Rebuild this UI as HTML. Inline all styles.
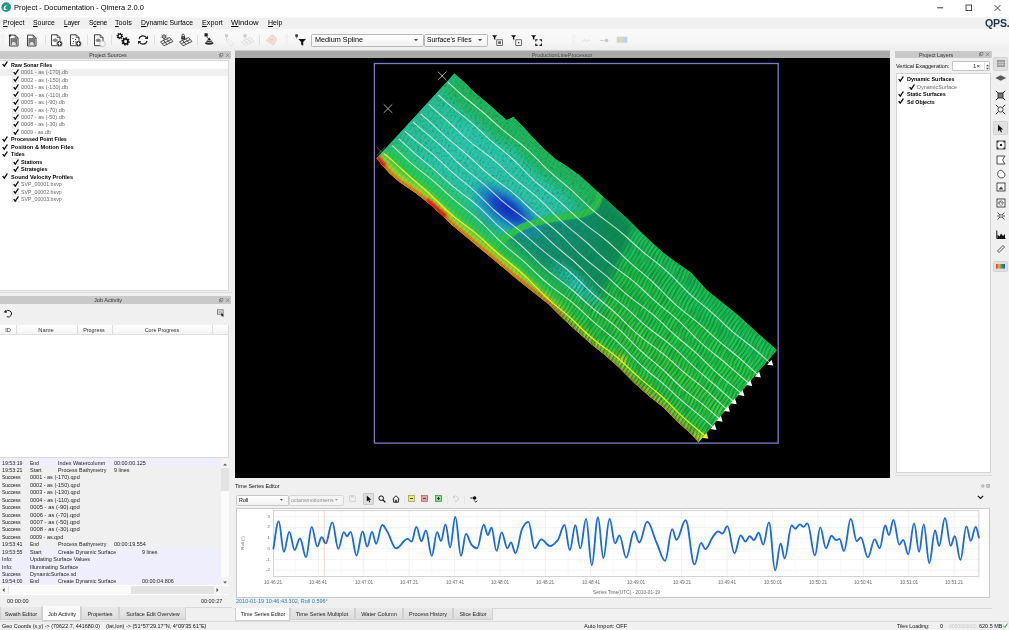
<!DOCTYPE html>
<html><head><meta charset="utf-8"><title>Project - Documentation - Qimera 2.0.0</title>
<style>
html,body{margin:0;padding:0;background:#f0f0f0;}
body{width:1009px;height:630px;position:relative;overflow:hidden;font-family:"Liberation Sans",sans-serif;}
.t{position:absolute;white-space:nowrap;will-change:transform;}
.r{position:absolute;}
svg{position:absolute;overflow:visible;}
</style></head><body>
<div class="r" style="left:0.00px;top:0.00px;width:1009.00px;height:17.30px;background:#fff;"></div>
<div class="r" style="left:0.00px;top:17.30px;width:1009.00px;height:11.50px;background:#f0f0f0;border-top:.5px solid #f7f7f7;"></div>
<div class="r" style="left:0.00px;top:28.80px;width:1009.00px;height:21.70px;background:linear-gradient(#fafafa,#f6f6f6 60%,#eeeeee);"></div>
<div class="r" style="left:0.00px;top:50.50px;width:1009.00px;height:580.00px;background:#f0f0f0;"></div>
<svg style="left:1.2px;top:2.2px" width="10.4" height="10.4" viewBox="0 0 12 12"><circle cx="6" cy="6" r="5.6" fill="#1f9a8a"/><path d="M3 7.5c0-3 3-4.5 5-3-1.500-.3-3 .6-3 2.200 0 1.500 1.500 2 2.600 1.300C6.500 9.800 3 9.800 3 7.500z" fill="#fff"/></svg>
<div class="t" style="top:3.00px;font-size:7.478px;line-height:10px;color:#000;left:14.20px;"><span>Project - Documentation - Qimera 2.0.0</span></div>
<svg style="left:930px;top:0" width="79" height="16" viewBox="0 0 79 16"><path d="M7.200 7.800h6" stroke="#222" stroke-width=".9" fill="none"/><rect x="36" y="5" width="5.600" height="5.600" fill="none" stroke="#222" stroke-width=".8"/><path d="M64.500 5l6 6M70.500 5l-6 6" stroke="#222" stroke-width=".8" fill="none"/></svg>
<div class="t" style="top:18.10px;font-size:6.882px;line-height:10px;color:#000;left:2.60px;"><span><u>P</u>roject</span></div>
<div class="t" style="top:18.10px;font-size:6.899px;line-height:10px;color:#000;left:33.00px;"><span><u>S</u>ource</span></div>
<div class="t" style="top:18.10px;font-size:6.789px;line-height:10px;color:#000;letter-spacing:-0.234px;left:63.50px;"><span><u>L</u>ayer</span></div>
<div class="t" style="top:18.10px;font-size:6.789px;line-height:10px;color:#000;letter-spacing:-0.252px;left:88.80px;"><span>S<u>c</u>ene</span></div>
<div class="t" style="top:18.10px;font-size:7.210px;line-height:10px;color:#000;left:115.00px;"><span><u>T</u>ools</span></div>
<div class="t" style="top:18.10px;font-size:6.854px;line-height:10px;color:#000;left:140.80px;"><span><u>D</u>ynamic Surface</span></div>
<div class="t" style="top:18.10px;font-size:7.205px;line-height:10px;color:#000;left:202.00px;"><span><u>E</u>xport</span></div>
<div class="t" style="top:18.10px;font-size:7.768px;line-height:10px;color:#000;left:231.40px;"><span><u>W</u>indow</span></div>
<div class="t" style="top:18.10px;font-size:7.002px;line-height:10px;color:#000;left:267.80px;"><span><u>H</u>elp</span></div>
<div class="t" style="top:17.50px;font-size:10.600px;line-height:10px;color:#1b3350;font-weight:700;letter-spacing:-0.200px;left:984.60px;"><span>QPS.</span></div>
<svg style="left:0.50px;top:34px" width="3" height="11.5"><path d="M.8 0V11.5M2.300 0V11.5" stroke="#cfcfcf" stroke-width=".5" stroke-dasharray=".6 1"/></svg>
<svg style="left:8.00px;top:33.50px" width="12" height="12.6" viewBox="0 0 12 12"><path d="M1.500 .8h5.800l2.700 2.700v8.200h-8.500z" fill="#fcfcfc" stroke="#2a2a2a" stroke-width=".9"/><path d="M7.200 .8v2.800h2.800" fill="none" stroke="#2a2a2a" stroke-width=".7"/><rect x="2.500" y="3.800" width="6.500" height="7" fill="#6f6f6f"/><path d="M3.800 10.800V8.600q1.950-2 3.900 0v2.200z" fill="#e4e4e4"/><path d="M3.500 5.500h4.500M3.500 6.800h4.500" stroke="#9a9a9a" stroke-width=".5"/><circle cx="1.900" cy="1.400" r="1.100" fill="#222"/></svg>
<svg style="left:26.00px;top:33.50px" width="12" height="12.6" viewBox="0 0 12 12"><path d="M1.500 .8h5.800l2.700 2.700v8.200h-8.500z" fill="#fcfcfc" stroke="#2a2a2a" stroke-width=".9"/><path d="M7.200 .8v2.800h2.800" fill="none" stroke="#2a2a2a" stroke-width=".7"/><rect x="2.500" y="3.800" width="6.500" height="7" fill="#6f6f6f"/><path d="M3.800 10.800V8.600q1.950-2 3.900 0v2.200z" fill="#e4e4e4"/><path d="M3.500 5.500h4.500M3.500 6.800h4.500" stroke="#9a9a9a" stroke-width=".5"/></svg>
<div class="r" style="left:44.50px;top:34.50px;width:0.60px;height:10.70px;background:#dddddd;"></div>
<svg style="left:50.25px;top:33.55px" width="12.5" height="12.5" viewBox="0 0 12.500 12.500"><path d="M1.500 .8h5.800l2.700 2.700v8.200h-8.500z" fill="#fcfcfc" stroke="#2a2a2a" stroke-width=".9"/><path d="M7.200 .8v2.800h2.800" fill="none" stroke="#2a2a2a" stroke-width=".7"/><ellipse cx="5.200" cy="6.300" rx="2.700" ry="1.600" fill="#888"/><ellipse cx="5.200" cy="5.600" rx="1.500" ry="1.200" fill="#888"/><circle cx="9.500" cy="9.700" r="2.900" fill="#222" stroke="#f6f6f6" stroke-width=".5"/><path d="M7.800 9.700h3.400M9.500 8v3.400" stroke="#fff" stroke-width="1"/></svg>
<svg style="left:68.75px;top:33.55px" width="12.5" height="12.5" viewBox="0 0 12.500 12.500"><path d="M1.500 .8h5.800l2.700 2.700v8.200h-8.500z" fill="#fcfcfc" stroke="#2a2a2a" stroke-width=".9"/><path d="M7.200 .8v2.800h2.800" fill="none" stroke="#2a2a2a" stroke-width=".7"/><path d="M3.500 4.500h1M6 5.500h1M4 7.500h1M6.200 8h1M3.500 9.500h1" stroke="#333" stroke-width="1"/><circle cx="9.500" cy="9.700" r="2.900" fill="#222" stroke="#f6f6f6" stroke-width=".5"/><path d="M7.800 9.700h3.400M9.500 8v3.400" stroke="#fff" stroke-width="1"/></svg>
<div class="r" style="left:86.80px;top:34.50px;width:0.60px;height:10.70px;background:#dddddd;"></div>
<svg style="left:92.75px;top:33.55px" width="12.5" height="12.5" viewBox="0 0 12.500 12.500"><path d="M1.500 .8h5.800l2.700 2.700v8.200h-8.500z" fill="#fcfcfc" stroke="#2a2a2a" stroke-width=".9"/><path d="M7.200 .8v2.800h2.800" fill="none" stroke="#2a2a2a" stroke-width=".7"/><ellipse cx="5.200" cy="6.300" rx="2.700" ry="1.600" fill="#888"/><ellipse cx="5.200" cy="5.600" rx="1.500" ry="1.200" fill="#888"/><circle cx="9.500" cy="9.700" r="2.800" fill="#f6f6f6" stroke="#b8b8b8" stroke-width=".8"/></svg>
<div class="r" style="left:110.80px;top:34.50px;width:0.60px;height:10.70px;background:#dddddd;"></div>
<svg style="left:116.30px;top:32.30px" width="14" height="14" viewBox="0 0 14 14"><path d="M5.88 4.42L7.03 4.66M4.97 5.77L5.62 6.75M3.38 6.08L3.14 7.23M2.03 5.17L1.05 5.82M1.72 3.58L0.57 3.34M2.63 2.23L1.98 1.25M4.22 1.92L4.46 0.77M5.57 2.83L6.55 2.18" stroke="#111" stroke-width="1.30" fill="none"/><circle cx="3.8" cy="4" r="1.85" fill="#f6f6f6" stroke="#111" stroke-width="1.30"/><path d="M12.27 9.94L13.74 10.24M11.10 11.67L11.93 12.92M9.06 12.07L8.76 13.54M7.33 10.90L6.08 11.73M6.93 8.86L5.46 8.56M8.10 7.13L7.27 5.88M10.14 6.73L10.44 5.26M11.87 7.90L13.12 7.07" stroke="#111" stroke-width="1.66" fill="none"/><circle cx="9.6" cy="9.4" r="2.37" fill="#f6f6f6" stroke="#111" stroke-width="1.66"/></svg>
<svg style="left:137.20px;top:33.80px" width="12" height="12" viewBox="0 0 12 12"><path d="M2 5A4.200 4.200 0 0 1 9.800 4.200M10 7A4.200 4.200 0 0 1 2.200 7.800" fill="none" stroke="#222" stroke-width="1.100"/><path d="M11 1.800v3.300H7.700zM1 10.200V6.900h3.300z" fill="#222"/></svg>
<div class="r" style="left:154.00px;top:34.50px;width:0.60px;height:10.70px;background:#dddddd;"></div>
<svg style="left:159.75px;top:33.85px" width="13.5" height="12.5" viewBox="0 0 13.500 12.500"><path d="M.5 7.800L9.500 3.500 13 7.500 4 11.800z" fill="#ececec" stroke="#222" stroke-width="0.75"/><path d="M3.500 6.400l3.500 4M6.500 4.900l3.500 4M2.250 9.800l9-4.300" stroke="#222" stroke-width="0.75" fill="none"/><circle cx="4" cy="2.600" r="1.700" fill="#fff" stroke="#222" stroke-width=".9"/><circle cx="4" cy="2.600" r=".6" fill="#222"/><path d="M1.200 .8l.8.600M6.800 .8l-.8.600M.6 3.400l1 .0M7.400 3.400l-1 0" stroke="#222" stroke-width=".5"/><path d="M4 4.300v2" stroke="#222" stroke-width=".6"/></svg>
<svg style="left:178.55px;top:33.85px" width="13.5" height="12.5" viewBox="0 0 13.500 12.500"><path d="M.5 7.800L9.500 3.500 13 7.500 4 11.800z" fill="#ececec" stroke="#222" stroke-width="0.75"/><path d="M3.500 6.400l3.500 4M6.500 4.900l3.500 4M2.250 9.800l9-4.300" stroke="#222" stroke-width="0.75" fill="none"/><rect x="2.300" y="2.200" width="3.800" height="3.200" rx=".4" fill="#222"/><path d="M3.100 2.200V1.300a1.100 1.100 0 0 1 2.200 0v.9" fill="none" stroke="#222" stroke-width=".8"/><circle cx="4.200" cy="3.700" r=".55" fill="#ddd"/></svg>
<div class="r" style="left:197.00px;top:34.50px;width:0.60px;height:10.70px;background:#dddddd;"></div>
<svg style="left:204.05px;top:33.25px" width="10.5" height="12.5" viewBox="0 0 10.500 12.500"><rect x=".5" y=".3" width="3.300" height="3.300" rx=".4" fill="#222"/><path d="M2.200 3.500L4.800 6" stroke="#222" stroke-width=".8"/><path d="M5.200 4.600L.8 10.500q4.400 2.600 8.800 0z" fill="#222"/><path d="M3.300 7.300q1.900 1 3.800 0M2.200 8.900q3 1.600 6 0" stroke="#f4f4f4" stroke-width=".7" fill="none"/></svg>
<svg style="left:222.50px;top:33.55px" width="12" height="12.5" viewBox="0 0 12 12.500"><rect x="2" y=".3" width="3" height="3" fill="#cacaca"/><path d="M3.500 3.300v2.500" stroke="#cacaca" stroke-width=".6"/><path d="M3 6.500l3-1.300 4.500 4.800-2.500 1.800z" fill="#f6f6f6" stroke="#d6d6d6" stroke-width=".6"/></svg>
<svg style="left:240.75px;top:33.85px" width="13.5" height="12.5" viewBox="0 0 13.500 12.500"><rect x="2.500" y=".3" width="3" height="3" fill="#cacaca"/><path d="M4 3.300v2.500" stroke="#cacaca" stroke-width=".6"/><path d="M.5 7.800L9.500 3.500 13 7.500 4 11.800z" fill="#f6f6f6" stroke="#d2d2d2" stroke-width="0.6"/><path d="M3.500 6.400l3.500 4M6.500 4.900l3.500 4M2.250 9.800l9-4.300" stroke="#d2d2d2" stroke-width="0.6" fill="none"/></svg>
<div class="r" style="left:258.80px;top:34.50px;width:0.60px;height:10.70px;background:#dddddd;"></div>
<svg style="left:264.50px;top:33.30px" width="13" height="13" viewBox="0 0 13 13"><path d="M1 7.500L7.500 1.500 12 6 8.500 12z" fill="#f1dcdc" stroke="#e3c3c3" stroke-width=".6"/><path d="M4.500 6.800h4" stroke="#d8b0b0" stroke-width=".6"/></svg>
<svg style="left:285.30px;top:34px" width="3" height="11.5"><path d="M.8 0V11.5M2.300 0V11.5" stroke="#cfcfcf" stroke-width=".5" stroke-dasharray=".6 1"/></svg>
<svg style="left:294.85px;top:33.60px" width="11.5" height="12" viewBox="0 0 11.500 12"><rect x=".3" y=".3" width="2.600" height="2.600" fill="#333"/><path d="M1.600 3v1.500" stroke="#333" stroke-width=".7"/><path d="M3.300 5h7.700l-2.800 3v3.800l-2.100-1.200V8z" fill="#111"/></svg>
<div class="r" style="left:311.40px;top:33.60px;width:110.30px;height:11.60px;background:linear-gradient(#fff,#f1f1f1);border:.6px solid #b9b9b9;border-radius:1.500px;"></div>
<div class="t" style="top:35.40px;font-size:7.264px;line-height:10px;color:#000;left:314.80px;"><span>Medium Spline</span></div>
<svg style="left:414.20px;top:38.90px" width="4" height="2.5"><path d="M0 0h4l-2.0 2.3z" fill="#444"/></svg>
<div class="r" style="left:424.30px;top:33.60px;width:61.40px;height:11.60px;background:linear-gradient(#fff,#f1f1f1);border:.6px solid #b9b9b9;border-radius:1.500px;"></div>
<div class="t" style="top:35.40px;font-size:6.841px;line-height:10px;color:#000;left:427.20px;"><span>Surface's Files</span></div>
<svg style="left:478.20px;top:38.90px" width="4" height="2.5"><path d="M0 0h4l-2.0 2.3z" fill="#444"/></svg>
<svg style="left:491.80px;top:34.50px" width="11" height="11" viewBox="0 0 11 11"><path d="M0 .3h5.200l-1.900 2v2.600l-1.400-.8V2.300z" fill="#111"/><rect x="4.800" y="4.800" width="5.600" height="5.600" fill="none" stroke="#333" stroke-width=".7"/><rect x="6.300" y="6.300" width="2.600" height="2.600" fill="#555"/></svg>
<svg style="left:511.30px;top:34.50px" width="11" height="11" viewBox="0 0 11 11"><path d="M0 .3h5.200l-1.900 2v2.600l-1.400-.8V2.300z" fill="#111"/><rect x="4.800" y="4.800" width="5.600" height="5.600" fill="none" stroke="#333" stroke-width=".7"/><rect x="7" y="7" width="1.300" height="1.300" fill="#333"/></svg>
<svg style="left:530.80px;top:34.50px" width="11" height="11" viewBox="0 0 11 11"><path d="M0 .3h5.200l-1.900 2v2.600l-1.400-.8V2.300z" fill="#111"/><path d="M4.800 6.600V4.800h1.800M8.600 4.800h1.800v1.800M10.400 8.600v1.800H8.600M6.600 10.400H4.800V8.600" fill="none" stroke="#111" stroke-width="1.100"/></svg>
<svg style="left:571.70px;top:34px" width="3" height="11.5"><path d="M.8 0V11.5M2.300 0V11.5" stroke="#cfcfcf" stroke-width=".5" stroke-dasharray=".6 1"/></svg>
<svg style="left:581.50px;top:37.50px" width="9" height="5" viewBox="0 0 9 5"><path d="M.5 3.500l2-1.500 2 1.500 2-1.500 2 1" fill="none" stroke="#c4c4c4" stroke-width=".8" stroke-dasharray="1.200 .6"/></svg>
<svg style="left:599.80px;top:37.50px" width="9" height="5" viewBox="0 0 9 5"><path d="M0 2.500h4" stroke="#c8c8c8" stroke-width=".8"/><circle cx="6.500" cy="2.500" r="1.800" fill="#c4c4c4"/></svg>
<svg style="left:616.70px;top:37.00px" width="10" height="5.6" viewBox="0 0 10 5.600"><defs><linearGradient id="cg1"><stop offset="0" stop-color="#e4c7c2"/><stop offset=".5" stop-color="#cfe0c2"/><stop offset="1" stop-color="#bcc9e6"/></linearGradient></defs><rect width="10" height="5.600" fill="url(#cg1)" stroke="#cfcfcf" stroke-width=".5"/></svg>
<div class="r" style="left:0.00px;top:51.00px;width:231.00px;height:8.00px;background:#c9c9c9;"></div>
<div class="t" style="top:50.20px;font-size:5.320px;line-height:10px;color:#333;left:-42.00px;width:300px;text-align:center;"><span>Project Sources</span></div>
<svg style="left:218.50px;top:52.80px" width="11" height="4.600" viewBox="0 0 11 4.600"><rect x=".3" y="1.300" width="2.600" height="2.600" fill="none" stroke="#666" stroke-width=".5"/><rect x="1.300" y=".3" width="2.600" height="2.600" fill="#c9c9c9" stroke="#666" stroke-width=".5"/><path d="M6.800 .5l3.600 3.600M10.400 .5l-3.600 3.600" stroke="#666" stroke-width=".6"/></svg>
<div class="r" style="left:0.00px;top:60.00px;width:229.00px;height:231.00px;background:#fff;border:.6px solid #d9d9d9;border-left:none;box-sizing:border-box;"></div>
<div class="r" style="left:0.00px;top:68.60px;width:227.70px;height:7.50px;background:#f0f0f0;"></div>
<svg style="left:2.00px;top:61.40px" width="6" height="6" viewBox="0 0 6 6"><path d="M.7 3.100l1.600 2.100L5.400 .5" fill="none" stroke="#0a0a0a" stroke-width="1.350"/></svg>
<div class="t" style="top:59.70px;font-size:5.350px;line-height:10px;color:#000;font-weight:700;left:11.10px;"><span>Raw Sonar Files</span></div>
<div class="r" style="left:12.30px;top:68.57px;width:6.60px;height:6.80px;background:#fff;border:.5px solid #ececec;box-sizing:border-box;"></div>
<svg style="left:12.60px;top:68.87px" width="6" height="6" viewBox="0 0 6 6"><path d="M.7 3.100l1.600 2.100L5.400 .5" fill="none" stroke="#0a0a0a" stroke-width="1.350"/></svg>
<div class="t" style="top:67.17px;font-size:5.565px;line-height:10px;color:#6a6a6a;left:21.30px;"><span>0001 - as (-170).db</span></div>
<div class="r" style="left:12.30px;top:76.04px;width:6.60px;height:6.80px;background:#fff;border:.5px solid #ececec;box-sizing:border-box;"></div>
<svg style="left:12.60px;top:76.34px" width="6" height="6" viewBox="0 0 6 6"><path d="M.7 3.100l1.600 2.100L5.400 .5" fill="none" stroke="#0a0a0a" stroke-width="1.350"/></svg>
<div class="t" style="top:74.64px;font-size:5.565px;line-height:10px;color:#6a6a6a;left:21.30px;"><span>0002 - as (-150).db</span></div>
<div class="r" style="left:12.30px;top:83.51px;width:6.60px;height:6.80px;background:#fff;border:.5px solid #ececec;box-sizing:border-box;"></div>
<svg style="left:12.60px;top:83.81px" width="6" height="6" viewBox="0 0 6 6"><path d="M.7 3.100l1.600 2.100L5.400 .5" fill="none" stroke="#0a0a0a" stroke-width="1.350"/></svg>
<div class="t" style="top:82.11px;font-size:5.565px;line-height:10px;color:#6a6a6a;left:21.30px;"><span>0003 - as (-130).db</span></div>
<div class="r" style="left:12.30px;top:90.98px;width:6.60px;height:6.80px;background:#fff;border:.5px solid #ececec;box-sizing:border-box;"></div>
<svg style="left:12.60px;top:91.28px" width="6" height="6" viewBox="0 0 6 6"><path d="M.7 3.100l1.600 2.100L5.400 .5" fill="none" stroke="#0a0a0a" stroke-width="1.350"/></svg>
<div class="t" style="top:89.58px;font-size:5.607px;line-height:10px;color:#6a6a6a;left:21.30px;"><span>0004 - as (-110).db</span></div>
<div class="r" style="left:12.30px;top:98.45px;width:6.60px;height:6.80px;background:#fff;border:.5px solid #ececec;box-sizing:border-box;"></div>
<svg style="left:12.60px;top:98.75px" width="6" height="6" viewBox="0 0 6 6"><path d="M.7 3.100l1.600 2.100L5.400 .5" fill="none" stroke="#0a0a0a" stroke-width="1.350"/></svg>
<div class="t" style="top:97.05px;font-size:5.536px;line-height:10px;color:#6a6a6a;left:21.30px;"><span>0005 - as (-90).db</span></div>
<div class="r" style="left:12.30px;top:105.92px;width:6.60px;height:6.80px;background:#fff;border:.5px solid #ececec;box-sizing:border-box;"></div>
<svg style="left:12.60px;top:106.22px" width="6" height="6" viewBox="0 0 6 6"><path d="M.7 3.100l1.600 2.100L5.400 .5" fill="none" stroke="#0a0a0a" stroke-width="1.350"/></svg>
<div class="t" style="top:104.52px;font-size:5.536px;line-height:10px;color:#6a6a6a;left:21.30px;"><span>0006 - as (-70).db</span></div>
<div class="r" style="left:12.30px;top:113.39px;width:6.60px;height:6.80px;background:#fff;border:.5px solid #ececec;box-sizing:border-box;"></div>
<svg style="left:12.60px;top:113.69px" width="6" height="6" viewBox="0 0 6 6"><path d="M.7 3.100l1.600 2.100L5.400 .5" fill="none" stroke="#0a0a0a" stroke-width="1.350"/></svg>
<div class="t" style="top:111.99px;font-size:5.536px;line-height:10px;color:#6a6a6a;left:21.30px;"><span>0007 - as (-50).db</span></div>
<div class="r" style="left:12.30px;top:120.86px;width:6.60px;height:6.80px;background:#fff;border:.5px solid #ececec;box-sizing:border-box;"></div>
<svg style="left:12.60px;top:121.16px" width="6" height="6" viewBox="0 0 6 6"><path d="M.7 3.100l1.600 2.100L5.400 .5" fill="none" stroke="#0a0a0a" stroke-width="1.350"/></svg>
<div class="t" style="top:119.46px;font-size:5.536px;line-height:10px;color:#6a6a6a;left:21.30px;"><span>0008 - as (-30).db</span></div>
<div class="r" style="left:12.30px;top:128.33px;width:6.60px;height:6.80px;background:#fff;border:.5px solid #ececec;box-sizing:border-box;"></div>
<svg style="left:12.60px;top:128.63px" width="6" height="6" viewBox="0 0 6 6"><path d="M.7 3.100l1.600 2.100L5.400 .5" fill="none" stroke="#0a0a0a" stroke-width="1.350"/></svg>
<div class="t" style="top:126.93px;font-size:5.399px;line-height:10px;color:#6a6a6a;left:21.30px;"><span>0009 - as.db</span></div>
<svg style="left:2.00px;top:136.10px" width="6" height="6" viewBox="0 0 6 6"><path d="M.7 3.100l1.600 2.100L5.400 .5" fill="none" stroke="#0a0a0a" stroke-width="1.350"/></svg>
<div class="t" style="top:134.40px;font-size:5.387px;line-height:10px;color:#000;font-weight:700;left:11.10px;"><span>Processed Point Files</span></div>
<svg style="left:2.00px;top:143.57px" width="6" height="6" viewBox="0 0 6 6"><path d="M.7 3.100l1.600 2.100L5.400 .5" fill="none" stroke="#0a0a0a" stroke-width="1.350"/></svg>
<div class="t" style="top:141.87px;font-size:5.671px;line-height:10px;color:#000;font-weight:700;left:11.10px;"><span>Position &amp; Motion Files</span></div>
<svg style="left:2.00px;top:151.04px" width="6" height="6" viewBox="0 0 6 6"><path d="M.7 3.100l1.600 2.100L5.400 .5" fill="none" stroke="#0a0a0a" stroke-width="1.350"/></svg>
<div class="t" style="top:149.34px;font-size:5.323px;line-height:10px;color:#000;font-weight:700;left:11.10px;"><span>Tides</span></div>
<div class="r" style="left:12.30px;top:158.21px;width:6.60px;height:6.80px;background:#fff;border:.5px solid #ececec;box-sizing:border-box;"></div>
<svg style="left:12.60px;top:158.51px" width="6" height="6" viewBox="0 0 6 6"><path d="M.7 3.100l1.600 2.100L5.400 .5" fill="none" stroke="#0a0a0a" stroke-width="1.350"/></svg>
<div class="t" style="top:156.81px;font-size:5.437px;line-height:10px;color:#000;font-weight:700;left:21.30px;"><span>Stations</span></div>
<div class="r" style="left:12.30px;top:165.68px;width:6.60px;height:6.80px;background:#fff;border:.5px solid #ececec;box-sizing:border-box;"></div>
<svg style="left:12.60px;top:165.98px" width="6" height="6" viewBox="0 0 6 6"><path d="M.7 3.100l1.600 2.100L5.400 .5" fill="none" stroke="#0a0a0a" stroke-width="1.350"/></svg>
<div class="t" style="top:164.28px;font-size:5.508px;line-height:10px;color:#000;font-weight:700;left:21.30px;"><span>Strategies</span></div>
<svg style="left:2.00px;top:173.45px" width="6" height="6" viewBox="0 0 6 6"><path d="M.7 3.100l1.600 2.100L5.400 .5" fill="none" stroke="#0a0a0a" stroke-width="1.350"/></svg>
<div class="t" style="top:171.75px;font-size:5.593px;line-height:10px;color:#000;font-weight:700;left:11.10px;"><span>Sound Velocity Profiles</span></div>
<div class="r" style="left:12.30px;top:180.62px;width:6.60px;height:6.80px;background:#fff;border:.5px solid #ececec;box-sizing:border-box;"></div>
<svg style="left:12.60px;top:180.92px" width="6" height="6" viewBox="0 0 6 6"><path d="M.7 3.100l1.600 2.100L5.400 .5" fill="none" stroke="#0a0a0a" stroke-width="1.350"/></svg>
<div class="t" style="top:179.22px;font-size:5.281px;line-height:10px;color:#6a6a6a;left:21.30px;"><span>SVP_00001.bsvp</span></div>
<div class="r" style="left:12.30px;top:188.09px;width:6.60px;height:6.80px;background:#fff;border:.5px solid #ececec;box-sizing:border-box;"></div>
<svg style="left:12.60px;top:188.39px" width="6" height="6" viewBox="0 0 6 6"><path d="M.7 3.100l1.600 2.100L5.400 .5" fill="none" stroke="#0a0a0a" stroke-width="1.350"/></svg>
<div class="t" style="top:186.69px;font-size:5.281px;line-height:10px;color:#6a6a6a;left:21.30px;"><span>SVP_00002.bsvp</span></div>
<div class="r" style="left:12.30px;top:195.56px;width:6.60px;height:6.80px;background:#fff;border:.5px solid #ececec;box-sizing:border-box;"></div>
<svg style="left:12.60px;top:195.86px" width="6" height="6" viewBox="0 0 6 6"><path d="M.7 3.100l1.600 2.100L5.400 .5" fill="none" stroke="#0a0a0a" stroke-width="1.350"/></svg>
<div class="t" style="top:194.16px;font-size:5.281px;line-height:10px;color:#6a6a6a;left:21.30px;"><span>SVP_00003.bsvp</span></div>
<div class="r" style="left:0.00px;top:292.20px;width:231.50px;height:0.70px;background:#dcdcdc;"></div>
<div class="r" style="left:0.00px;top:296.00px;width:231.00px;height:8.00px;background:#c9c9c9;"></div>
<div class="t" style="top:295.20px;font-size:5.612px;line-height:10px;color:#333;left:-42.00px;width:300px;text-align:center;"><span>Job Activity</span></div>
<svg style="left:218.50px;top:297.80px" width="11" height="4.600" viewBox="0 0 11 4.600"><rect x=".3" y="1.300" width="2.600" height="2.600" fill="none" stroke="#666" stroke-width=".5"/><rect x="1.300" y=".3" width="2.600" height="2.600" fill="#c9c9c9" stroke="#666" stroke-width=".5"/><path d="M6.800 .5l3.600 3.600M10.400 .5l-3.600 3.600" stroke="#666" stroke-width=".6"/></svg>
<svg style="left:3.10px;top:309.10px" width="9" height="9" viewBox="0 0 9 9"><path d="M2.600 2.800A3.300 3.300 0 1 1 3.800 7.700" fill="none" stroke="#222" stroke-width="1"/><path d="M.6 3.300l3.200.6L3 .8z" fill="#222"/></svg>
<svg style="left:217.20px;top:309.40px" width="8" height="8" viewBox="0 0 8 8"><rect x=".5" y=".8" width="5.600" height="4.400" fill="#eee" stroke="#555" stroke-width=".7"/><path d="M1.500 2.300h3.600M1.500 3.600h3.600" stroke="#777" stroke-width=".5"/><path d="M4.300 4l3 2.200-1.300.2.600 1.200-.7.300-.6-1.200-1 .8z" fill="#222"/></svg>
<div class="r" style="left:0.00px;top:324.60px;width:229.00px;height:133.00px;background:#fff;border:.6px solid #d9d9d9;border-left:none;box-sizing:border-box;"></div>
<div class="r" style="left:0.00px;top:324.90px;width:227.70px;height:9.30px;background:linear-gradient(#fff,#f3f3f3);border-bottom:.6px solid #dedede;"></div>
<div class="r" style="left:16.10px;top:325.00px;width:0.60px;height:9.20px;background:#dcdcdc;"></div>
<div class="r" style="left:76.60px;top:325.00px;width:0.60px;height:9.20px;background:#dcdcdc;"></div>
<div class="r" style="left:111.90px;top:325.00px;width:0.60px;height:9.20px;background:#dcdcdc;"></div>
<div class="r" style="left:212.20px;top:325.00px;width:0.60px;height:9.20px;background:#dcdcdc;"></div>
<div class="t" style="top:324.80px;font-size:5.613px;line-height:10px;color:#333;left:-141.80px;width:300px;text-align:center;"><span>ID</span></div>
<div class="t" style="top:324.80px;font-size:5.817px;line-height:10px;color:#333;left:-103.60px;width:300px;text-align:center;"><span>Name</span></div>
<div class="t" style="top:324.80px;font-size:5.402px;line-height:10px;color:#333;left:-55.80px;width:300px;text-align:center;"><span>Progress</span></div>
<div class="t" style="top:324.80px;font-size:5.359px;line-height:10px;color:#333;left:12.20px;width:300px;text-align:center;"><span>Core Progress</span></div>
<div class="r" style="left:0.00px;top:458.60px;width:228.60px;height:135.00px;background:#fff;border-top:.6px solid #d0d0d0;"></div>
<div class="r" style="left:0;top:459.4px;width:221.3px;height:125.600px;overflow:hidden;background:#f0f0f0">
<div class="r" style="left:0;top:-0.52px;width:221.3px;height:7.430px;background:#eeeefc"></div>
<div class="r" style="left:0;top:6.91px;width:221.3px;height:7.430px;background:#f0f0f0"></div>
<div class="r" style="left:0;top:14.34px;width:221.3px;height:7.430px;background:#f0f0f0"></div>
<div class="r" style="left:0;top:21.77px;width:221.3px;height:7.430px;background:#f0f0f0"></div>
<div class="r" style="left:0;top:29.20px;width:221.3px;height:7.430px;background:#f0f0f0"></div>
<div class="r" style="left:0;top:36.63px;width:221.3px;height:7.430px;background:#f0f0f0"></div>
<div class="r" style="left:0;top:44.06px;width:221.3px;height:7.430px;background:#f0f0f0"></div>
<div class="r" style="left:0;top:51.49px;width:221.3px;height:7.430px;background:#f0f0f0"></div>
<div class="r" style="left:0;top:58.92px;width:221.3px;height:7.430px;background:#f0f0f0"></div>
<div class="r" style="left:0;top:66.35px;width:221.3px;height:7.430px;background:#f0f0f0"></div>
<div class="r" style="left:0;top:73.78px;width:221.3px;height:7.430px;background:#f0f0f0"></div>
<div class="r" style="left:0;top:81.21px;width:221.3px;height:7.430px;background:#f0f0f0"></div>
<div class="r" style="left:0;top:88.64px;width:221.3px;height:7.430px;background:#eeeefc"></div>
<div class="r" style="left:0;top:96.07px;width:221.3px;height:7.430px;background:#eeeefc"></div>
<div class="r" style="left:0;top:103.50px;width:221.3px;height:7.430px;background:#eeeefc"></div>
<div class="r" style="left:0;top:110.93px;width:221.3px;height:7.430px;background:#eeeefc"></div>
<div class="r" style="left:0;top:118.36px;width:221.3px;height:7.430px;background:#eeeefc"></div>
</div>
<div class="t" style="top:457.60px;font-size:5.271px;line-height:10px;color:#1c1c1c;left:2.00px;clip-path:inset(3.300px 0 0 0);"><span>19:53:19</span></div>
<div class="t" style="top:457.60px;font-size:5.208px;line-height:10px;color:#1c1c1c;letter-spacing:-0.116px;left:30.00px;clip-path:inset(3.300px 0 0 0);"><span>End</span></div>
<div class="t" style="top:457.60px;font-size:5.539px;line-height:10px;color:#1c1c1c;left:58.00px;clip-path:inset(3.300px 0 0 0);"><span>Index Watercolumn</span></div>
<div class="t" style="top:457.60px;font-size:5.442px;line-height:10px;color:#1c1c1c;left:114.30px;clip-path:inset(3.300px 0 0 0);"><span>00:00:00.125</span></div>
<div class="t" style="top:465.03px;font-size:5.271px;line-height:10px;color:#1c1c1c;left:2.00px;"><span>19:53:21</span></div>
<div class="t" style="top:465.03px;font-size:5.498px;line-height:10px;color:#1c1c1c;left:30.00px;"><span>Start</span></div>
<div class="t" style="top:465.03px;font-size:5.412px;line-height:10px;color:#1c1c1c;left:58.00px;"><span>Process Bathymetry</span></div>
<div class="t" style="top:465.03px;font-size:5.367px;line-height:10px;color:#1c1c1c;left:114.30px;"><span>9 lines</span></div>
<div class="t" style="top:472.46px;font-size:5.208px;line-height:10px;color:#1c1c1c;letter-spacing:-0.170px;left:2.00px;"><span>Success</span></div>
<div class="t" style="top:472.46px;font-size:5.491px;line-height:10px;color:#1c1c1c;left:30.00px;"><span>0001 - as (-170).qpd</span></div>
<div class="t" style="top:479.89px;font-size:5.208px;line-height:10px;color:#1c1c1c;letter-spacing:-0.170px;left:2.00px;"><span>Success</span></div>
<div class="t" style="top:479.89px;font-size:5.491px;line-height:10px;color:#1c1c1c;left:30.00px;"><span>0002 - as (-150).qpd</span></div>
<div class="t" style="top:487.32px;font-size:5.208px;line-height:10px;color:#1c1c1c;letter-spacing:-0.170px;left:2.00px;"><span>Success</span></div>
<div class="t" style="top:487.32px;font-size:5.491px;line-height:10px;color:#1c1c1c;left:30.00px;"><span>0003 - as (-130).qpd</span></div>
<div class="t" style="top:494.75px;font-size:5.208px;line-height:10px;color:#1c1c1c;letter-spacing:-0.170px;left:2.00px;"><span>Success</span></div>
<div class="t" style="top:494.75px;font-size:5.545px;line-height:10px;color:#1c1c1c;left:30.00px;"><span>0004 - as (-110).qpd</span></div>
<div class="t" style="top:502.18px;font-size:5.208px;line-height:10px;color:#1c1c1c;letter-spacing:-0.170px;left:2.00px;"><span>Success</span></div>
<div class="t" style="top:502.18px;font-size:5.850px;line-height:10px;color:#1c1c1c;left:30.00px;"><span>0005 - as (-90).qpd</span></div>
<div class="t" style="top:509.61px;font-size:5.208px;line-height:10px;color:#1c1c1c;letter-spacing:-0.170px;left:2.00px;"><span>Success</span></div>
<div class="t" style="top:509.61px;font-size:5.850px;line-height:10px;color:#1c1c1c;left:30.00px;"><span>0006 - as (-70).qpd</span></div>
<div class="t" style="top:517.04px;font-size:5.208px;line-height:10px;color:#1c1c1c;letter-spacing:-0.170px;left:2.00px;"><span>Success</span></div>
<div class="t" style="top:517.04px;font-size:5.850px;line-height:10px;color:#1c1c1c;left:30.00px;"><span>0007 - as (-50).qpd</span></div>
<div class="t" style="top:524.47px;font-size:5.208px;line-height:10px;color:#1c1c1c;letter-spacing:-0.170px;left:2.00px;"><span>Success</span></div>
<div class="t" style="top:524.47px;font-size:5.850px;line-height:10px;color:#1c1c1c;left:30.00px;"><span>0008 - as (-30).qpd</span></div>
<div class="t" style="top:531.90px;font-size:5.208px;line-height:10px;color:#1c1c1c;letter-spacing:-0.170px;left:2.00px;"><span>Success</span></div>
<div class="t" style="top:531.90px;font-size:5.438px;line-height:10px;color:#1c1c1c;left:30.00px;"><span>0009 - as.qpd</span></div>
<div class="t" style="top:539.33px;font-size:5.271px;line-height:10px;color:#1c1c1c;left:2.00px;"><span>19:53:41</span></div>
<div class="t" style="top:539.33px;font-size:5.208px;line-height:10px;color:#1c1c1c;letter-spacing:-0.116px;left:30.00px;"><span>End</span></div>
<div class="t" style="top:539.33px;font-size:5.412px;line-height:10px;color:#1c1c1c;left:58.00px;"><span>Process Bathymetry</span></div>
<div class="t" style="top:539.33px;font-size:5.442px;line-height:10px;color:#1c1c1c;left:114.30px;"><span>00:00:19.554</span></div>
<div class="t" style="top:546.76px;font-size:5.271px;line-height:10px;color:#1c1c1c;left:2.00px;"><span>19:53:55</span></div>
<div class="t" style="top:546.76px;font-size:5.498px;line-height:10px;color:#1c1c1c;left:30.00px;"><span>Start</span></div>
<div class="t" style="top:546.76px;font-size:5.352px;line-height:10px;color:#1c1c1c;left:58.00px;"><span>Create Dynamic Surface</span></div>
<div class="t" style="top:546.76px;font-size:5.367px;line-height:10px;color:#1c1c1c;left:142.30px;"><span>9 lines</span></div>
<div class="t" style="top:554.19px;font-size:5.415px;line-height:10px;color:#1c1c1c;left:2.00px;"><span>Info:</span></div>
<div class="t" style="top:554.19px;font-size:5.463px;line-height:10px;color:#1c1c1c;left:30.00px;"><span>Updating Surface Values</span></div>
<div class="t" style="top:561.62px;font-size:5.415px;line-height:10px;color:#1c1c1c;left:2.00px;"><span>Info:</span></div>
<div class="t" style="top:561.62px;font-size:5.539px;line-height:10px;color:#1c1c1c;left:30.00px;"><span>Illuminating Surface</span></div>
<div class="t" style="top:569.05px;font-size:5.208px;line-height:10px;color:#1c1c1c;letter-spacing:-0.170px;left:2.00px;"><span>Success</span></div>
<div class="t" style="top:569.05px;font-size:5.359px;line-height:10px;color:#1c1c1c;left:30.00px;"><span>DynamicSurface.sd</span></div>
<div class="t" style="top:576.48px;font-size:5.271px;line-height:10px;color:#1c1c1c;left:2.00px;"><span>19:54:00</span></div>
<div class="t" style="top:576.48px;font-size:5.208px;line-height:10px;color:#1c1c1c;letter-spacing:-0.116px;left:30.00px;"><span>End</span></div>
<div class="t" style="top:576.48px;font-size:5.352px;line-height:10px;color:#1c1c1c;left:58.00px;"><span>Create Dynamic Surface</span></div>
<div class="t" style="top:576.48px;font-size:5.442px;line-height:10px;color:#1c1c1c;left:142.30px;"><span>00:00:04.806</span></div>
<div class="r" style="left:221.30px;top:459.40px;width:7.30px;height:125.60px;background:#e3e3e3;"></div>
<div class="r" style="left:221.30px;top:491.40px;width:7.30px;height:87.00px;background:#fbfbfb;"></div>
<div class="r" style="left:221.30px;top:459.40px;width:7.30px;height:9.00px;background:#f4f4f4;"></div>
<div class="r" style="left:221.30px;top:577.80px;width:7.30px;height:7.20px;background:#f4f4f4;"></div>
<svg style="left:223.00px;top:462.80px" width="4" height="3" viewBox="0 0 4 3"><path d="M0 2.600L2 .4l2 2.200z" fill="#555"/></svg>
<svg style="left:223.00px;top:580.80px" width="4" height="3" viewBox="0 0 4 3"><path d="M0 .4L2 2.600 4 .4z" fill="#555"/></svg>
<div class="r" style="left:0.00px;top:586.40px;width:221.30px;height:7.20px;background:#e3e3e3;"></div>
<div class="r" style="left:8.60px;top:586.40px;width:122.40px;height:7.20px;background:#fbfbfb;"></div>
<div class="r" style="left:0.00px;top:586.40px;width:8.20px;height:7.20px;background:#f4f4f4;"></div>
<div class="r" style="left:213.60px;top:586.40px;width:7.70px;height:7.20px;background:#f4f4f4;"></div>
<div class="r" style="left:221.30px;top:586.40px;width:7.30px;height:7.20px;background:#f0f0f0;"></div>
<svg style="left:2.10px;top:588.00px" width="3" height="4" viewBox="0 0 3 4"><path d="M2.600 0L.4 2l2.200 2z" fill="#555"/></svg>
<svg style="left:215.80px;top:588.00px" width="3" height="4" viewBox="0 0 3 4"><path d="M.4 0L2.600 2 .4 4z" fill="#555"/></svg>
<div class="t" style="top:596.40px;font-size:5.559px;line-height:10px;color:#222;left:7.00px;"><span>00:00:00</span></div>
<div class="t" style="top:596.40px;font-size:5.464px;line-height:10px;color:#222;left:200.60px;"><span>00:00:27</span></div>
<div class="r" style="left:0.00px;top:606.60px;width:231.50px;height:0.60px;background:#d8d8d8;"></div>
<div class="r" style="left:-0.50px;top:606.60px;width:186.70px;height:0.60px;background:#d4d4d4;"></div>
<div class="r" style="left:0.00px;top:607.20px;width:42.00px;height:12.60px;background:linear-gradient(#e9e9e9,#dedede);border:.6px solid #d0d0d0;border-top:none;box-sizing:border-box;"></div>
<div class="t" style="top:608.70px;font-size:5.753px;line-height:10px;color:#222;left:-129.00px;width:300px;text-align:center;"><span>Swath Editor</span></div>
<div class="r" style="left:42.00px;top:606.40px;width:39.40px;height:14.20px;background:#fbfbfb;border:.6px solid #cfcfcf;border-top:none;box-sizing:border-box;"></div>
<div class="t" style="top:608.70px;font-size:5.609px;line-height:10px;color:#222;left:-88.30px;width:300px;text-align:center;"><span>Job Activity</span></div>
<div class="r" style="left:81.40px;top:607.20px;width:38.00px;height:12.60px;background:linear-gradient(#e9e9e9,#dedede);border:.6px solid #d0d0d0;border-top:none;box-sizing:border-box;"></div>
<div class="t" style="top:608.70px;font-size:5.543px;line-height:10px;color:#222;left:-49.60px;width:300px;text-align:center;"><span>Properties</span></div>
<div class="r" style="left:119.40px;top:607.20px;width:66.30px;height:12.60px;background:linear-gradient(#e9e9e9,#dedede);border:.6px solid #d0d0d0;border-top:none;box-sizing:border-box;"></div>
<div class="t" style="top:608.70px;font-size:5.419px;line-height:10px;color:#222;left:2.55px;width:300px;text-align:center;"><span>Surface Edit Overview</span></div>
<div class="r" style="left:0.00px;top:620.60px;width:1009.00px;height:9.40px;background:#f0f0f0;border-top:.6px solid #dcdcdc;box-sizing:border-box;"></div>
<div class="t" style="top:620.80px;font-size:5.436px;line-height:10px;color:#111;left:2.30px;"><span>Geo Coords (x,y) -&gt; (70622.7, 441680.0)</span></div>
<div class="t" style="top:620.80px;font-size:5.522px;line-height:10px;color:#111;left:106.20px;"><span>(lat,lon) -&gt; (51°57'29.17"N, 4°09'35.61"E)</span></div>
<div class="t" style="top:621.00px;font-size:5.608px;line-height:10px;color:#111;left:584.30px;"><span>Auto Import: OFF</span></div>
<div class="t" style="top:621.00px;font-size:5.256px;line-height:10px;color:#111;left:896.70px;"><span>Tiles Loading:</span></div>
<div class="t" style="top:621.00px;font-size:5.600px;line-height:10px;color:#111;left:939.80px;"><span>0</span></div>
<div class="t" style="top:621.00px;font-size:5.115px;line-height:10px;color:#c9c9c9;letter-spacing:-0.103px;left:949.00px;"><span>0000000000</span></div>
<div class="t" style="top:621.00px;font-size:5.507px;line-height:10px;color:#111;left:978.60px;"><span>620.5 MB</span></div>
<svg style="left:1002.80px;top:623.10px" width="5" height="5" viewBox="0 0 5 5"><path d="M.5 2.800l1.400 1.600L4.600 .6" fill="none" stroke="#2a9a2a" stroke-width="1"/></svg>
<div class="r" style="left:235.00px;top:50.00px;width:655.00px;height:8.50px;background:#a9a9a9;border-top:1px solid #cdcdcd;box-sizing:border-box;"></div>
<div class="t" style="top:50.20px;font-size:5.434px;line-height:10px;color:#4a4a4a;left:412.30px;width:300px;text-align:center;"><span>ProductionLineProcessor</span></div>
<div class="r" style="left:235.00px;top:58.00px;width:655.00px;height:420.00px;background:#000;"></div>
<svg style="left:0;top:0" width="1009" height="630" viewBox="0 0 1009 630"><defs><clipPath id="sclip"><polygon points="454.4,73.3 464.4,82.2 475.6,93.3 487.8,103.3 497.8,112.2 506.7,120.0 510.7,118.2 513.3,116.7 523.3,126.7 533.3,137.8 544.4,148.9 555.6,158.9 567.8,166.7 580.0,175.4 595.9,190.1 611.7,204.4 627.6,218.7 643.5,234.6 662.5,252.0 675.2,261.5 691.0,272.6 706.9,290.1 722.8,302.8 738.6,315.5 757.7,332.9 777.0,350.0 698.6,442.3 691.4,434.3 677.1,421.4 662.9,407.1 648.6,395.7 634.3,382.9 620.0,368.6 605.7,355.7 591.4,344.3 577.1,331.4 562.9,318.6 548.6,304.3 534.3,292.9 516.0,278.4 500.0,265.0 483.7,251.4 467.5,238.0 451.4,224.5 443.3,216.4 429.8,204.2 416.3,193.4 400.0,182.6 389.3,173.2 376.3,158.3"/></clipPath><linearGradient id="gbase" gradientUnits="userSpaceOnUse" x1="376" y1="158" x2="698" y2="442"><stop offset="0" stop-color="#2abe94"/><stop offset=".12" stop-color="#2ec6ae"/><stop offset=".38" stop-color="#2cc2a8"/><stop offset=".52" stop-color="#22b470"/><stop offset=".62" stop-color="#27c64a"/><stop offset="1" stop-color="#2cd246"/></linearGradient><radialGradient id="gblue"><stop offset="0" stop-color="#1226c4"/><stop offset=".35" stop-color="#1640cc" stop-opacity=".95"/><stop offset=".7" stop-color="#1a78d0" stop-opacity=".55"/><stop offset="1" stop-color="#20a0c8" stop-opacity="0"/></radialGradient><radialGradient id="gblue2"><stop offset="0" stop-color="#2088d8" stop-opacity=".8"/><stop offset=".6" stop-color="#22a0d0" stop-opacity=".5"/><stop offset="1" stop-color="#20b0c0" stop-opacity="0"/></radialGradient><radialGradient id="gdark"><stop offset="0" stop-color="#0c7f72" stop-opacity=".95"/><stop offset=".6" stop-color="#0e8a70" stop-opacity=".8"/><stop offset="1" stop-color="#109060" stop-opacity="0"/></radialGradient><radialGradient id="gcyan"><stop offset="0" stop-color="#38d6e0" stop-opacity=".95"/><stop offset=".5" stop-color="#30c8c8" stop-opacity=".7"/><stop offset="1" stop-color="#28c0a0" stop-opacity="0"/></radialGradient><radialGradient id="gyel"><stop offset="0" stop-color="#f0e020" stop-opacity=".95"/><stop offset="1" stop-color="#a0e020" stop-opacity="0"/></radialGradient><filter id="b1" x="-20%" y="-20%" width="140%" height="140%"><feGaussianBlur stdDeviation="1.2"/></filter><filter id="b3" x="-20%" y="-20%" width="140%" height="140%"><feGaussianBlur stdDeviation="3"/></filter><filter id="b6" x="-20%" y="-20%" width="140%" height="140%"><feGaussianBlur stdDeviation="6"/></filter><filter id="rip" x="0" y="0" width="100%" height="100%" color-interpolation-filters="sRGB"><feTurbulence type="fractalNoise" baseFrequency="0.6 0.07" numOctaves="1" seed="7"/><feColorMatrix type="matrix" values="0 0 0 0 0.02  0 0 0 0 0.42  0 0 0 0 0.16  5 0 0 0 -2.3"/></filter><filter id="rip2" x="0" y="0" width="100%" height="100%" color-interpolation-filters="sRGB"><feTurbulence type="fractalNoise" baseFrequency="0.55 0.09" numOctaves="1" seed="11"/><feColorMatrix type="matrix" values="0 0 0 0 0.02  0 0 0 0 0.35  0 0 0 0 0.3  5 0 0 0 -2.3"/></filter><filter id="spk2" x="0" y="0" width="100%" height="100%" color-interpolation-filters="sRGB"><feTurbulence type="fractalNoise" baseFrequency="0.4" numOctaves="2" seed="9"/><feColorMatrix type="matrix" values="0 0 0 0 0.02  0 0 0 0 0.3  0 0 0 0 0.25  0 4 0 0 -2.1"/></filter><filter id="spk" x="0" y="0" width="100%" height="100%"><feTurbulence type="fractalNoise" baseFrequency="0.5" numOctaves="2" seed="3"/><feColorMatrix type="matrix" values="0 0 0 0 0.01  0 0 0 0 0.22  0 0 0 0 0.2  0 4.5 0 0 -2.2"/></filter><pattern id="prip" width="3.7" height="26" patternUnits="userSpaceOnUse"><path d="M1.2 -1q1.300 7 0 14t0 14" fill="none" stroke="#0c8a3c" stroke-width="1.150"/></pattern><pattern id="prip2" width="4.300" height="19" patternUnits="userSpaceOnUse"><path d="M1.500 -1q-1.200 5 0 10.500t0 10.500" fill="none" stroke="#0c8a3c" stroke-width="1"/></pattern><linearGradient id="gfade" gradientUnits="userSpaceOnUse" x1="376" y1="158" x2="698" y2="442"><stop offset=".42" stop-color="#fff" stop-opacity="0"/><stop offset=".6" stop-color="#fff" stop-opacity="1"/></linearGradient><mask id="mfade"><rect x="300" y="50" width="520" height="420" fill="url(#gfade)"/></mask></defs><g clip-path="url(#sclip)"><polygon points="454.4,73.3 464.4,82.2 475.6,93.3 487.8,103.3 497.8,112.2 506.7,120.0 510.7,118.2 513.3,116.7 523.3,126.7 533.3,137.8 544.4,148.9 555.6,158.9 567.8,166.7 580.0,175.4 595.9,190.1 611.7,204.4 627.6,218.7 643.5,234.6 662.5,252.0 675.2,261.5 691.0,272.6 706.9,290.1 722.8,302.8 738.6,315.5 757.7,332.9 777.0,350.0 698.6,442.3 691.4,434.3 677.1,421.4 662.9,407.1 648.6,395.7 634.3,382.9 620.0,368.6 605.7,355.7 591.4,344.3 577.1,331.4 562.9,318.6 548.6,304.3 534.3,292.9 516.0,278.4 500.0,265.0 483.7,251.4 467.5,238.0 451.4,224.5 443.3,216.4 429.8,204.2 416.3,193.4 400.0,182.6 389.3,173.2 376.3,158.3" fill="url(#gbase)"/><path d="M454.4 73.3L464.4 82.2L475.6 93.3L487.8 103.3L497.8 112.2L506.7 120.0L510.7 118.2L513.3 116.7L523.3 126.7L533.3 137.8L544.4 148.9L555.6 158.9L567.8 166.7L580.0 175.4L595.9 190.1L611.7 204.4L627.6 218.7" fill="none" stroke="#20b456" stroke-width="44" filter="url(#b6)" opacity=".9"/><path d="M548.6 304.3L562.9 318.6L577.1 331.4L591.4 344.3L605.7 355.7L620.0 368.6L634.3 382.9L648.6 395.7L662.9 407.1L677.1 421.4L691.4 434.3L698.6 442.3" fill="none" stroke="#5cd030" stroke-width="90" filter="url(#b6)" opacity=".45"/><path d="M627.6 218.7L643.5 234.6L662.5 252.0L675.2 261.5L691.0 272.6L706.9 290.1L722.8 302.8L738.6 315.5L757.7 332.9L777.0 350.0" fill="none" stroke="#1fc46e" stroke-width="56" filter="url(#b6)" opacity=".55"/><path d="M488 252C497 243 508 234 523.300 226.700C540 219.500 560 217.500 580.500 214.300C592 212 598.500 206 600 194L614 207L630 224C626 246 616 268 600 298C578 292 548 278 522 268z" fill="#0e7e6a" opacity=".7" filter="url(#b3)"/><path d="M600 196L632 226C628 240 622 252 616 262C606 250 600 226 598 208z" fill="#118c4a" opacity=".6" filter="url(#b3)"/><ellipse cx="0" cy="0" rx="44" ry="15" fill="url(#gcyan)" transform="translate(578 287) rotate(42)"/><clipPath id="dclip"><path d="M488 252C497 243 508 234 523.300 226.700C540 219.500 560 217.500 580.500 214.300C592 212 598.500 206 600 194L614 207L632 226C626 250 616 272 602 300C578 294 548 280 520 268z"/></clipPath><mask id="mdark"><path d="M488 252C497 243 508 234 523.300 226.700C540 219.500 560 217.500 580.500 214.300C592 212 598.500 206 600 194L614 207L630 224C626 246 616 268 600 298C578 292 548 278 522 268z" fill="#fff" filter="url(#b3)"/></mask><g mask="url(#mdark)"><rect x="470" y="180" width="180" height="135" filter="url(#spk)" opacity=".75"/></g><linearGradient id="gfade2" gradientUnits="userSpaceOnUse" x1="376" y1="158" x2="698" y2="442"><stop offset=".4" stop-color="#fff" stop-opacity="1"/><stop offset=".58" stop-color="#fff" stop-opacity="0"/></linearGradient><mask id="mfade2"><rect x="300" y="50" width="520" height="420" fill="url(#gfade2)"/></mask><g mask="url(#mfade2)"><rect x="370" y="65" width="330" height="300" filter="url(#spk2)" opacity=".26"/></g><ellipse cx="0" cy="0" rx="34" ry="22" fill="url(#gblue2)" transform="translate(486 222) rotate(38)"/><ellipse cx="0" cy="0" rx="46" ry="20" fill="url(#gblue)" transform="translate(507 209) rotate(36)"/><path d="M488 252C497 243 508 234 523.300 226.700C540 219.500 560 217.500 580.500 214.300C592 212 598.500 206 600 194" fill="none" stroke="#30c04e" stroke-width="7" stroke-linecap="round"/><path d="M376.3 158.3L389.3 173.2L400.0 182.6L416.3 193.4L429.8 204.2L443.3 216.4L451.4 224.5L467.5 238.0L483.7 251.4L500.0 265.0L516.0 278.4L534.3 292.9L548.6 304.3L562.9 318.6L577.1 331.4L591.4 344.3L605.7 355.7L620.0 368.6L634.3 382.9L648.6 395.7L662.9 407.1L677.1 421.4L691.4 434.3L698.6 442.3" fill="none" stroke="#2cc846" stroke-width="50" filter="url(#b6)" opacity=".8"/><path d="M376.3 158.3L389.3 173.2L400.0 182.6L416.3 193.4L429.8 204.2L443.3 216.4L451.4 224.5L467.5 238.0L483.7 251.4L500.0 265.0L516.0 278.4L534.3 292.9L548.6 304.3L562.9 318.6" fill="none" stroke="#b8e024" stroke-width="14" filter="url(#b3)"/><path d="M562.9 318.6L577.1 331.4L591.4 344.3L605.7 355.7L620.0 368.6L634.3 382.9L648.6 395.7L662.9 407.1L677.1 421.4L691.4 434.3L698.6 442.3" fill="none" stroke="#a8dc24" stroke-width="11" filter="url(#b3)"/><path d="M376.3 158.3L389.3 173.2L400.0 182.6L416.3 193.4L429.8 204.2L443.3 216.4L451.4 224.5L467.5 238.0L483.7 251.4L500.0 265.0L516.0 278.4L534.3 292.9L548.6 304.3L562.9 318.6" fill="none" stroke="#dc7418" stroke-width="6.500" filter="url(#b1)"/><path d="M562.9 318.6L577.1 331.4L591.4 344.3L605.7 355.7L620.0 368.6L634.3 382.9L648.6 395.7L662.9 407.1L677.1 421.4L691.4 434.3L698.6 442.3" fill="none" stroke="#d88a20" stroke-width="4" filter="url(#b1)"/><path d="M376.300 158.300L384 167M426 201L445 217.500" fill="none" stroke="#e81c10" stroke-width="7" filter="url(#b1)"/><ellipse cx="0" cy="0" rx="13" ry="8" fill="url(#gyel)" transform="translate(621 358) rotate(43)"/><ellipse cx="0" cy="0" rx="9" ry="6" fill="url(#gyel)" transform="translate(700 437) rotate(43)"/><g mask="url(#mfade)"><g transform="translate(376 158) rotate(30)"><rect x="-2" y="-115" width="447" height="201" fill="url(#prip)" opacity=".9"/><rect x="-2" y="-115" width="447" height="201" filter="url(#rip)" opacity=".3"/></g></g><g opacity=".22"><g transform="translate(376 158) rotate(30)"><rect x="-2" y="-115" width="447" height="201" fill="url(#prip2)"/></g></g></g><path d="M447.8 82.2L456.5 90.2L465.5 98.0L474.7 105.5L483.8 113.0L492.6 121.0L501.5 128.9L510.8 136.3L520.2 143.5L529.2 151.3L537.6 159.7L545.9 168.2L554.8 176.1L563.9 183.6L572.9 191.4L581.5 199.6L590.0 207.8L599.1 215.5L608.6 222.6L618.1 229.8L627.1 237.5L635.8 245.5L644.7 253.4L654.1 260.7L663.3 268.1L672.1 276.1L680.4 284.7L688.8 293.1L697.7 300.9L707.0 308.3L715.9 316.1L724.5 324.3L733.3 332.3L742.6 339.7L752.0 347.0L761.0 354.7L769.8 362.6" fill="none" stroke="#e8f0e8" stroke-width="1.05" stroke-linejoin="round" opacity="0.85"/><path d="M773.3 365.6L767.2 364.7L771.5 359.7z" fill="#fff"/><path d="M438.3 95.0L447.1 102.9L456.1 110.4L465.4 117.7L474.4 125.3L483.0 133.4L491.7 141.3L500.8 148.8L509.8 156.4L518.4 164.5L526.6 173.0L535.0 181.3L544.0 188.9L553.2 196.2L562.2 203.8L570.9 211.9L579.6 219.8L588.8 227.1L598.3 234.1L607.6 241.5L616.3 249.4L624.7 257.7L633.4 265.6L642.5 273.1L651.5 280.8L659.9 289.0L668.1 297.5L676.7 305.6L685.8 313.1L695.2 320.3L704.1 327.9L712.8 335.9L721.7 343.7L730.9 351.0L740.0 358.5L748.7 366.4L757.4 374.4" fill="none" stroke="#e8f0e8" stroke-width="1.05" stroke-linejoin="round" opacity="0.85"/><path d="M760.9 377.4L754.8 376.5L759.1 371.5z" fill="#fff"/><path d="M428.7 104.4L437.5 112.2L446.4 120.0L455.0 128.0L463.5 136.2L472.5 143.9L482.0 150.9L491.4 158.0L500.3 165.7L508.9 173.8L517.8 181.5L527.0 188.9L536.2 196.3L544.8 204.4L553.0 212.9L561.4 221.2L570.4 228.9L579.5 236.3L588.5 244.0L597.0 252.1L605.7 260.0L615.0 267.4L624.5 274.3L633.9 281.6L642.6 289.5L651.2 297.6L660.1 305.3L669.2 312.7L678.3 320.3L686.7 328.6L694.9 337.1L703.5 345.2L712.6 352.6L721.9 360.0L730.8 367.6L739.7 375.4L748.7 383.0" fill="none" stroke="#e8f0e8" stroke-width="1.05" stroke-linejoin="round" opacity="0.85"/><path d="M752.2 386.0L746.1 385.1L750.4 380.1z" fill="#fff"/><path d="M420.8 114.0L429.7 121.7L438.3 129.8L447.0 137.8L456.0 145.4L465.1 153.0L473.8 160.9L482.4 169.0L491.4 176.6L500.9 183.6L510.4 190.7L519.3 198.4L527.9 206.5L536.6 214.5L545.7 222.0L554.8 229.5L563.5 237.5L571.7 246.0L580.1 254.3L589.0 262.0L598.3 269.4L607.4 276.9L616.0 284.9L624.8 292.8L633.9 300.2L643.5 307.2L652.8 314.4L661.6 322.3L670.1 330.6L678.8 338.5L687.9 346.0L696.9 353.6L705.4 361.8L713.9 370.1L722.7 377.9L731.9 385.3L740.9 392.9" fill="none" stroke="#e8f0e8" stroke-width="1.05" stroke-linejoin="round" opacity="0.85"/><path d="M744.4 395.9L738.3 395.0L742.6 390.0z" fill="#fff"/><path d="M412.9 121.9L421.9 129.6L431.0 137.1L439.9 144.8L448.4 153.0L456.7 161.5L465.5 169.4L474.7 176.7L483.9 184.2L492.7 192.1L501.3 200.1L510.4 207.7L519.9 214.7L529.4 221.8L538.3 229.6L546.8 237.8L555.4 245.9L564.4 253.5L573.5 261.0L582.2 269.0L590.5 277.5L598.9 285.8L607.8 293.5L617.2 300.7L626.4 308.2L635.1 316.1L643.8 324.1L653.0 331.5L662.5 338.5L671.9 345.8L680.6 353.8L689.0 362.1L697.6 370.2L706.6 377.8L715.5 385.5L724.3 393.4L733.2 401.2" fill="none" stroke="#e8f0e8" stroke-width="1.05" stroke-linejoin="round" opacity="0.85"/><path d="M736.7 404.2L730.6 403.3L734.9 398.3z" fill="#fff"/><path d="M404.9 131.4L413.9 139.0L423.1 146.4L432.3 153.8L441.0 161.7L449.6 169.9L458.5 177.6L467.7 185.1L476.5 192.9L484.9 201.2L493.3 209.5L502.3 217.2L511.7 224.3L521.0 231.5L529.9 239.3L538.7 247.2L547.8 254.7L557.2 261.8L566.6 269.0L575.4 276.9L583.8 285.2L592.3 293.4L601.3 301.0L610.4 308.5L619.1 316.4L627.5 324.8L636.1 332.9L645.3 340.3L654.8 347.3L664.1 354.6L673.0 362.4L681.7 370.3L690.8 377.8L700.1 385.1L709.0 392.9L717.6 400.9L726.4 408.8" fill="none" stroke="#e8f0e8" stroke-width="1.05" stroke-linejoin="round" opacity="0.85"/><path d="M729.9 411.8L723.8 410.9L728.1 405.9z" fill="#fff"/><path d="M398.6 138.7L407.3 146.7L416.1 154.6L425.3 162.1L434.3 169.7L443.0 177.7L451.9 185.5L461.2 192.8L470.7 200.0L479.7 207.6L488.1 215.9L496.5 224.3L505.3 232.2L514.4 239.7L523.3 247.5L531.8 255.8L540.2 264.2L549.1 272.0L558.5 279.1L567.9 286.3L576.9 294.0L585.6 302.0L594.6 309.8L603.9 317.0L613.3 324.3L622.1 332.2L630.4 340.6L638.8 349.0L647.7 356.8L656.8 364.3L665.6 372.2L674.1 380.5L682.7 388.5L692.0 395.9L701.3 403.2L710.4 410.8L719.2 418.7" fill="none" stroke="#e8f0e8" stroke-width="1.05" stroke-linejoin="round" opacity="0.85"/><path d="M722.7 421.7L716.6 420.8L720.9 415.8z" fill="#fff"/><path d="M392.2 145.7L400.9 153.7L409.6 161.8L418.7 169.4L428.1 176.7L437.2 184.3L445.9 192.3L454.7 200.2L464.0 207.7L473.3 215.1L482.1 223.0L490.4 231.5L498.7 239.9L507.5 247.9L516.7 255.4L525.7 263.1L534.3 271.3L542.9 279.5L552.0 287.1L561.5 294.2L571.0 301.4L579.9 309.2L588.5 317.3L597.4 325.2L606.6 332.6L615.8 340.2L624.4 348.3L632.6 356.9L641.1 365.2L650.0 373.0L659.3 380.4L668.2 388.2L676.9 396.3L685.8 404.1L695.0 411.6L704.2 419.1L713.0 427.0" fill="none" stroke="#e8f0e8" stroke-width="1.05" stroke-linejoin="round" opacity="0.85"/><path d="M716.5 430.0L710.4 429.1L714.7 424.1z" fill="#fff"/><path d="M384.3 153.7L393.3 161.4L402.0 169.5L410.8 177.5L419.8 185.2L428.7 193.0L437.3 201.2L445.7 209.5L454.7 217.3L464.2 224.5L473.7 231.6L482.7 239.4L491.3 247.5L500.2 255.3L509.5 262.8L518.7 270.2L527.4 278.2L535.7 286.8L544.1 295.2L552.9 303.1L562.1 310.6L571.1 318.4L579.6 326.7L588.2 334.8L597.4 342.4L607.0 349.4L616.4 356.7L625.2 364.6L633.8 372.7L642.7 380.6L651.9 388.1L661.1 395.7L669.6 403.9L677.9 412.4L686.7 420.4L695.8 428.0L704.8 435.7" fill="none" stroke="#f4f020" stroke-width="1.2" stroke-linejoin="round" opacity="1"/><path d="M708.3 438.7L702.2 437.8L706.5 432.8z" fill="#f4f020"/><path d="M437.9 71.60000000000001l8.600 8.600M446.5 71.60000000000001l-8.600 8.600" stroke="#e6e6e6" stroke-width=".8" opacity="0.9"/><path d="M383.7 104.3l8.600 8.600M392.3 104.3l-8.600 8.600" stroke="#e6e6e6" stroke-width=".8" opacity="0.9"/><path d="M376.7 147.1l8.600 8.600M385.3 147.1l-8.600 8.600" stroke="#e6e6e6" stroke-width=".8" opacity="0.55"/></svg>
<svg style="left:0;top:0" width="1009" height="630" viewBox="0 0 1009 630"><rect x="374.400" y="63.500" width="403.800" height="379.600" fill="none" stroke="#7d7dc4" stroke-width="1.300"/></svg>
<div class="r" style="left:894.50px;top:50.60px;width:97.00px;height:7.80px;background:#c9c9c9;"></div>
<div class="t" style="top:49.70px;font-size:5.353px;line-height:10px;color:#333;left:785.50px;width:300px;text-align:center;"><span>Project Layers</span></div>
<svg style="left:979.00px;top:52.30px" width="11" height="4.600" viewBox="0 0 11 4.600"><rect x=".3" y="1.300" width="2.600" height="2.600" fill="none" stroke="#666" stroke-width=".5"/><rect x="1.300" y=".3" width="2.600" height="2.600" fill="#c9c9c9" stroke="#666" stroke-width=".5"/><path d="M6.800 .5l3.600 3.600M10.400 .5l-3.600 3.600" stroke="#666" stroke-width=".6"/></svg>
<div class="t" style="top:61.30px;font-size:5.498px;line-height:10px;color:#111;left:896.00px;"><span>Vertical Exaggeration:</span></div>
<div class="r" style="left:952.00px;top:61.00px;width:37.60px;height:10.40px;background:#fff;border:.6px solid #c4c4c4;box-sizing:border-box;border-radius:1px;"></div>
<div class="t" style="top:61.40px;font-size:6.050px;line-height:10px;color:#222;letter-spacing:0.098px;left:972.60px;"><span>1×</span></div>
<svg style="left:985.50px;top:63.50px" width="3" height="6" viewBox="0 0 3 6"><path d="M0 2.200L1.500 .6 3 2.200zM0 3.800L1.500 5.400 3 3.800z" fill="#444"/></svg>
<div class="r" style="left:984.20px;top:62.30px;width:0.50px;height:8.30px;background:#e2e2e2;"></div>
<div class="r" style="left:895.60px;top:73.30px;width:95.20px;height:400.00px;background:#fff;border:.6px solid #d4d4d4;box-sizing:border-box;"></div>
<div class="r" style="left:894.50px;top:474.60px;width:97.00px;height:0.60px;background:#dadada;"></div>
<svg style="left:898.00px;top:75.90px" width="6" height="6" viewBox="0 0 6 6"><path d="M.7 3.100l1.600 2.100L5.400 .5" fill="none" stroke="#0a0a0a" stroke-width="1.350"/></svg>
<div class="t" style="top:74.20px;font-size:5.498px;line-height:10px;color:#000;font-weight:700;left:907.40px;"><span>Dynamic Surfaces</span></div>
<div class="r" style="left:908.30px;top:83.20px;width:6.60px;height:6.80px;background:#fff;border:.5px solid #ececec;box-sizing:border-box;"></div>
<svg style="left:908.60px;top:83.50px" width="6" height="6" viewBox="0 0 6 6"><path d="M.7 3.100l1.600 2.100L5.400 .5" fill="none" stroke="#0a0a0a" stroke-width="1.350"/></svg>
<div class="t" style="top:81.80px;font-size:5.460px;line-height:10px;color:#6a6a6a;left:917.30px;"><span>DynamicSurface</span></div>
<svg style="left:898.00px;top:91.10px" width="6" height="6" viewBox="0 0 6 6"><path d="M.7 3.100l1.600 2.100L5.400 .5" fill="none" stroke="#0a0a0a" stroke-width="1.350"/></svg>
<div class="t" style="top:89.40px;font-size:5.378px;line-height:10px;color:#000;font-weight:700;left:907.40px;"><span>Static Surfaces</span></div>
<svg style="left:898.00px;top:98.30px" width="6" height="6" viewBox="0 0 6 6"><path d="M.7 3.100l1.600 2.100L5.400 .5" fill="none" stroke="#0a0a0a" stroke-width="1.350"/></svg>
<div class="t" style="top:96.60px;font-size:5.323px;line-height:10px;color:#000;font-weight:700;left:907.40px;"><span>Sd Objects</span></div>
<div class="r" style="left:992.60px;top:50.50px;width:16.40px;height:426.00px;background:#f0f0f0;"></div>
<div class="r" style="left:993.40px;top:56.60px;width:14.40px;height:14.00px;background:#e0e0e0;border:.6px solid #d2d2d2;box-sizing:border-box;border-radius:1.500px;"></div>
<svg style="left:996.60px;top:60.10px" width="8" height="7" viewBox="0 0 8 7"><rect x=".5" y=".5" width="7" height="6" fill="#9a9a9a" stroke="#777" stroke-width=".6"/><path d="M.5 2.500h7M.5 4.500h7M2.800 .5v6M5.200 .5v6" stroke="#e2e2e2" stroke-width=".5"/></svg>
<svg style="left:994.85px;top:75.00px" width="11.5" height="6" viewBox="0 0 11.500 6"><path d="M5.750 .3L11.200 3 5.750 5.700 .3 3z" fill="#5a5a5a"/></svg>
<svg style="left:995.10px;top:89.70px" width="11" height="11" viewBox="0 0 11 11"><rect x="3" y="3" width="5" height="5" fill="#777" stroke="#222" stroke-width=".8"/><path d="M.8 .8l2.400 2.400M10.200 .8L7.800 3.200M.8 10.200l2.400-2.400M10.200 10.200L7.800 7.800" stroke="#222" stroke-width="1"/></svg>
<svg style="left:995.10px;top:104.10px" width="11" height="11" viewBox="0 0 11 11"><circle cx="5.500" cy="5.500" r="2.600" fill="#eee" stroke="#222" stroke-width=".8"/><path d="M.8 .8l2.600 2.600M10.200 .8L7.600 3.400M.8 10.200l2.600-2.600M10.200 10.200L7.600 7.600" stroke="#222" stroke-width="1"/></svg>
<div class="r" style="left:993.40px;top:121.30px;width:14.40px;height:14.00px;background:#e0e0e0;border:.6px solid #d2d2d2;box-sizing:border-box;border-radius:1.500px;"></div>
<svg style="left:997.10px;top:123.80px" width="7" height="9" viewBox="0 0 7 9"><path d="M1 .5v7l1.800-1.600 1.200 2.600 1-.5-1.200-2.500H6.200z" fill="#111"/></svg>
<svg style="left:995.60px;top:140.40px" width="10" height="10" viewBox="0 0 10 10"><rect x="1" y="1" width="8" height="8" fill="#fff" stroke="#222" stroke-width=".8"/><rect x="4" y="4" width="2" height="2" fill="#222"/><path d="M1 1h1.500v1.500H1zM7.500 1H9v1.500H7.500zM1 7.500h1.500V9H1zM7.500 7.500H9V9H7.500z" fill="#222"/></svg>
<svg style="left:995.60px;top:154.90px" width="10" height="10" viewBox="0 0 10 10"><path d="M1 1h8L6.500 5 9 9H1z" fill="#fff" stroke="#222" stroke-width=".8"/></svg>
<svg style="left:995.60px;top:169.00px" width="10" height="10" viewBox="0 0 10 10"><path d="M2.500 2.500c1.500-2 4-1.500 4.500.5 2 .8 2.500 3 1.500 4.500S4.500 9.500 3 8 1 4.500 2.500 2.500z" fill="#fff" stroke="#222" stroke-width=".8"/></svg>
<svg style="left:995.60px;top:182.30px" width="10" height="10" viewBox="0 0 10 10"><rect x="1" y="1" width="8" height="8" fill="#fff" stroke="#222" stroke-width=".8"/><path d="M2.500 7.500l2.500-3 2.500 3z" fill="#444"/></svg>
<svg style="left:995.60px;top:197.50px" width="10" height="10" viewBox="0 0 10 10"><rect x="1" y="1" width="8" height="8" fill="#fff" stroke="#222" stroke-width=".8"/><path d="M2.500 6l2-2.500 1.500 2 1.500-1.500" fill="none" stroke="#222" stroke-width=".7"/><circle cx="5" cy="5" r="2.300" fill="none" stroke="#444" stroke-width=".6"/></svg>
<svg style="left:995.60px;top:211.20px" width="10" height="10" viewBox="0 0 10 10"><path d="M1.500 1.500l7 7M8.500 1.500l-7 7" stroke="#222" stroke-width=".8"/><circle cx="5" cy="5" r="1.400" fill="#fff" stroke="#222" stroke-width=".6"/><circle cx="2" cy="5" r=".7" fill="#222"/><circle cx="8" cy="5" r=".7" fill="#222"/></svg>
<svg style="left:995.60px;top:230.30px" width="10" height="9" viewBox="0 0 10 9"><path d="M.8 .5v8h8.700" fill="none" stroke="#111" stroke-width="1"/><path d="M1.500 8V4.500l2 2 1.500-3 2 2.500 2-2V8z" fill="#111"/></svg>
<svg style="left:995.60px;top:243.50px" width="10" height="10" viewBox="0 0 10 10"><path d="M1.500 7L7 1.500 8.500 3 3 8.500z" fill="#fff" stroke="#222" stroke-width=".8"/></svg>
<div class="r" style="left:993.40px;top:260.60px;width:14.40px;height:11.60px;background:#e0e0e0;border:.6px solid #d2d2d2;box-sizing:border-box;border-radius:1.500px;"></div>
<svg style="left:996.10px;top:264.10px" width="9" height="4.6" viewBox="0 0 9 4.600"><defs><linearGradient id="cg2"><stop offset="0" stop-color="#e03020"/><stop offset=".35" stop-color="#e0c020"/><stop offset=".6" stop-color="#30b040"/><stop offset="1" stop-color="#2050d0"/></linearGradient></defs><rect width="9" height="4.600" fill="url(#cg2)"/></svg>
<div class="t" style="top:481.30px;font-size:5.467px;line-height:10px;color:#111;left:235.20px;"><span>Time Series Editor</span></div>
<svg style="left:981.30px;top:483.90px" width="9" height="4" viewBox="0 0 9 4"><circle cx="1.800" cy="2" r="1.300" fill="none" stroke="#777" stroke-width=".5"/><path d="M1 2.800L2.600 1.200" stroke="#777" stroke-width=".4"/><rect x="5.800" y=".6" width="2.800" height="2.800" fill="none" stroke="#777" stroke-width=".5"/><path d="M6.400 1.200l1.600 1.600M8 1.200L6.400 2.800" stroke="#777" stroke-width=".4"/></svg>
<svg style="left:976.70px;top:495.10px" width="7" height="4.6" viewBox="0 0 7 4.600"><path d="M.8 .8L3.500 3.500 6.200 .8" fill="none" stroke="#111" stroke-width="1.200"/></svg>
<div class="r" style="left:236.40px;top:494.60px;width:51.00px;height:9.20px;background:linear-gradient(#fff,#f1f1f1);border:.6px solid #c6c6c6;border-radius:1.500px;"></div>
<div class="t" style="top:494.70px;font-size:5.398px;line-height:10px;color:#000;left:238.80px;"><span>Roll</span></div>
<svg style="left:280.40px;top:498.70px" width="3" height="2.0"><path d="M0 0h3l-1.5 1.8z" fill="#444"/></svg>
<div class="r" style="left:289.00px;top:494.60px;width:52.60px;height:9.20px;background:#f4f4f4;border:.6px solid #d6d6d6;border-radius:1.500px;"></div>
<div class="t" style="top:494.70px;font-size:5.290px;line-height:10px;color:#8e8e8e;left:291.30px;"><span>octansmotionsens</span></div>
<svg style="left:334.60px;top:498.70px" width="3" height="2.0"><path d="M0 0h3l-1.5 1.8z" fill="#9a9a9a"/></svg>
<svg style="left:348.80px;top:495.20px" width="7" height="7" viewBox="0 0 7 7"><path d="M.6 .6h4.800l1 1v4.800H.6z" fill="#f2f2f2" stroke="#bdbdbd" stroke-width=".6"/><rect x="1.800" y=".8" width="2.800" height="1.800" fill="#cfcfcf"/></svg>
<div class="r" style="left:362.80px;top:493.00px;width:11.60px;height:11.60px;background:#e0e0e0;border:.6px solid #c6c6c6;box-sizing:border-box;border-radius:1px;"></div>
<svg style="left:365.60px;top:494.70px" width="6" height="8" viewBox="0 0 6 8"><path d="M.8 .4v6.200l1.600-1.400 1 2.300.9-.4-1-2.300h2z" fill="#111"/></svg>
<svg style="left:377.60px;top:494.70px" width="8" height="8" viewBox="0 0 8 8"><circle cx="3.200" cy="3.200" r="2.300" fill="none" stroke="#111" stroke-width="1"/><path d="M4.900 4.900l2.500 2.500" stroke="#111" stroke-width="1.300"/></svg>
<svg style="left:391.70px;top:494.70px" width="8" height="8" viewBox="0 0 8 8"><path d="M.6 4L4 .8 7.400 4M1.600 3.600v3.600h4.800V3.600" fill="none" stroke="#111" stroke-width=".9"/><rect x="3.300" y="4.800" width="1.400" height="2.400" fill="#111"/></svg>
<div class="r" style="left:403.70px;top:495.00px;width:0.50px;height:8.60px;background:#e6e6e6;"></div>
<svg style="left:408.10px;top:495.20px" width="7" height="7" viewBox="0 0 7 7"><rect x=".5" y=".5" width="6" height="6" fill="#e6e690" stroke="#9a9a48" stroke-width=".7"/><path d="M2 3.500h3" stroke="#222" stroke-width=".8"/></svg>
<svg style="left:421.30px;top:495.20px" width="7" height="7" viewBox="0 0 7 7"><rect x=".5" y=".5" width="6" height="6" fill="#e8a2a2" stroke="#a85c5c" stroke-width=".7"/><path d="M2 3.500h3" stroke="#222" stroke-width=".8"/></svg>
<svg style="left:434.90px;top:495.20px" width="7" height="7" viewBox="0 0 7 7"><rect x=".5" y=".5" width="6" height="6" fill="#92d892" stroke="#3a8a3a" stroke-width=".7"/><path d="M2 3.500h3" stroke="#222" stroke-width=".8"/><path d="M3.500 2v3" stroke="#222" stroke-width=".8"/></svg>
<div class="r" style="left:446.60px;top:495.00px;width:0.50px;height:8.60px;background:#e6e6e6;"></div>
<svg style="left:451.70px;top:495.20px" width="7" height="7" viewBox="0 0 7 7"><path d="M1.500 2.200A2.600 2.600 0 1 1 2.600 6" fill="none" stroke="#c3c3c3" stroke-width=".8"/><path d="M.3 2.600l2.400.4L2.100.7z" fill="#c3c3c3"/></svg>
<div class="r" style="left:464.00px;top:495.00px;width:0.50px;height:8.60px;background:#e6e6e6;"></div>
<svg style="left:469.60px;top:495.10px" width="8" height="8" viewBox="0 0 8 8"><path d="M.3 3h2.500" stroke="#111" stroke-width=".9"/><circle cx="4.600" cy="3" r="1.800" fill="#111"/><path d="M4.200 5.600l1.600 1.500 1.600-1.500" fill="none" stroke="#111" stroke-width=".9"/></svg>
<div class="r" style="left:236.40px;top:507.90px;width:754.00px;height:89.90px;background:#fff;border:.6px solid #c9c9c9;box-sizing:border-box;"></div>
<svg style="left:0;top:0" width="1009" height="630" viewBox="0 0 1009 630"><path d="M273.4 570.29H978.9M273.4 559.57H978.9M273.4 548.85H978.9M273.4 538.13H978.9M273.4 527.41H978.9M273.4 516.69H978.9" stroke="#e9e9e9" stroke-width=".6" fill="none"/><path d="M318.32 510.7V576.4M363.74 510.7V576.4M409.16 510.7V576.4M454.58 510.7V576.4M500.00 510.7V576.4M545.42 510.7V576.4M590.84 510.7V576.4M636.26 510.7V576.4M681.68 510.7V576.4M727.10 510.7V576.4M772.52 510.7V576.4M817.94 510.7V576.4M863.36 510.7V576.4M908.78 510.7V576.4M954.20 510.7V576.4" stroke="#e4e4e4" stroke-width=".6" fill="none"/><path d="M295.61 510.7V576.4M341.03 510.7V576.4M386.45 510.7V576.4M431.87 510.7V576.4M477.29 510.7V576.4M522.71 510.7V576.4M568.13 510.7V576.4M613.55 510.7V576.4M658.97 510.7V576.4M704.39 510.7V576.4M749.81 510.7V576.4M795.23 510.7V576.4M840.65 510.7V576.4M886.07 510.7V576.4M931.49 510.7V576.4M976.91 510.7V576.4" stroke="#f5f5f5" stroke-width=".6" fill="none"/><rect x="273.4" y="510.7" width="705.5" height="65.69999999999999" fill="none" stroke="#c8c8c8" stroke-width=".8"/><path d="M324.200 510.7V576.4" stroke="#f3b0b0" stroke-width=".6"/><path d="M273.4 548.7C275.4 536.3 276.7 521.4 278.7 521.4C280.7 521.4 281.9 551.7 283.9 551.7C285.9 551.7 287.2 531.8 289.3 531.8C291.3 531.8 292.6 550.0 294.6 550.0C296.6 550.0 297.9 538.5 300.0 538.5C302.3 538.5 303.7 557.1 306.0 557.1C308.2 557.1 309.6 526.8 311.7 526.8C313.8 526.8 315.2 546.4 317.3 546.4C319.0 546.4 320.0 537.1 321.7 537.1C323.2 537.1 324.2 543.4 325.7 543.4C328.2 543.4 329.7 522.3 332.3 522.3C334.6 522.3 336.0 548.7 338.3 548.7C340.4 548.7 341.8 532.1 343.9 532.1C345.1 532.1 345.8 536.2 347.1 536.2C348.4 536.2 349.3 531.8 350.6 531.8C352.9 531.8 354.3 555.5 356.5 555.5C358.8 555.5 360.3 531.4 362.6 531.4C364.3 531.4 365.5 546.6 367.2 546.6C369.1 546.6 370.2 531.8 372.0 531.8C373.6 531.8 374.6 543.7 376.1 543.7C378.4 543.7 379.9 525.0 382.2 525.0C384.1 525.0 385.3 528.5 387.2 531.4C390.6 536.5 392.7 548.3 396.1 548.3C400.5 548.3 403.3 538.9 407.7 538.9C409.2 538.9 410.1 541.6 411.6 541.6C413.4 541.6 414.6 526.8 416.4 526.8C418.3 526.8 419.5 541.2 421.4 541.2C423.1 541.2 424.2 530.3 425.9 530.3C428.1 530.3 429.5 555.8 431.8 555.8C433.8 555.8 435.1 532.1 437.1 532.1C438.6 532.1 439.5 541.0 441.0 541.0C442.7 541.0 443.8 524.3 445.5 524.3C447.3 524.3 448.4 547.3 450.1 547.3C452.1 547.3 453.3 517.0 455.3 517.0C457.5 517.0 458.8 555.8 461.0 555.8C462.9 555.8 464.1 533.9 466.0 533.9C468.0 533.9 469.3 542.2 471.4 544.6C473.5 547.1 474.9 548.2 477.1 548.2C479.6 548.2 481.3 524.6 483.8 524.6C485.3 524.6 486.3 535.0 487.8 535.0C489.2 535.0 490.1 527.7 491.5 527.7C493.4 527.7 494.6 550.8 496.5 550.8C498.5 550.8 499.7 532.3 501.7 532.3C503.9 532.3 505.2 548.3 507.4 548.3C508.7 548.3 509.6 542.5 511.0 542.5C512.7 542.5 513.7 553.2 515.4 553.2C518.0 553.2 519.6 534.3 522.2 528.7C524.6 523.6 526.1 521.9 528.4 521.9C530.8 521.9 532.3 548.2 534.7 548.2C537.2 548.2 538.8 539.3 541.3 539.3C544.5 539.3 546.6 546.0 549.9 546.0C552.9 546.0 554.8 543.7 557.9 539.8C560.4 536.5 562.0 525.0 564.5 525.0C566.5 525.0 567.8 550.1 569.8 550.1C571.9 550.1 573.3 525.2 575.4 525.2C577.2 525.2 578.4 548.3 580.3 548.3C582.5 548.3 583.9 518.9 586.1 518.9C588.2 518.9 589.6 565.3 591.8 565.3C594.1 565.3 595.6 517.5 598.0 517.5C600.0 517.5 601.3 558.0 603.4 558.0C605.7 558.0 607.2 518.9 609.6 518.9C611.7 518.9 613.0 543.4 615.1 543.4C616.8 543.4 617.8 535.3 619.4 535.3C622.0 535.3 623.6 557.6 626.2 557.6C629.2 557.6 631.2 531.2 634.2 531.2C636.1 531.2 637.3 542.5 639.2 542.5C642.3 542.5 644.2 521.6 647.2 521.6C650.8 521.6 653.0 535.5 656.5 542.5C659.8 548.9 661.8 560.8 665.1 560.8C667.8 560.8 669.5 529.1 672.2 529.1C673.8 529.1 674.9 539.8 676.5 539.8C680.0 539.8 682.1 520.2 685.6 520.2C689.0 520.2 691.1 564.4 694.5 564.4C697.0 564.4 698.6 542.8 701.1 542.8C702.7 542.8 703.7 549.1 705.2 549.1C708.1 549.1 709.9 540.6 712.7 537.1C714.7 534.6 716.0 531.4 718.1 531.4C719.8 531.4 720.8 533.5 722.5 533.5C724.4 533.5 725.5 526.1 727.3 526.1C730.1 526.1 731.8 553.2 734.5 553.2C736.9 553.2 738.3 535.3 740.7 535.3C742.5 535.3 743.6 541.6 745.4 541.6C747.1 541.6 748.1 536.2 749.8 536.2C751.4 536.2 752.4 540.1 753.9 540.1C755.7 540.1 756.9 532.7 758.7 532.7C760.4 532.7 761.5 544.6 763.2 544.6C765.4 544.6 766.7 522.3 768.9 522.3C771.3 522.3 772.8 570.5 775.1 570.5C777.2 570.5 778.6 543.4 780.7 543.4C782.2 543.4 783.1 558.5 784.6 558.5C787.3 558.5 789.0 525.5 791.7 525.5C793.1 525.5 793.9 528.7 795.3 528.7C797.0 528.7 798.1 524.3 799.8 524.3C801.3 524.3 802.2 526.8 803.7 526.8C805.1 526.8 806.0 523.4 807.4 523.4C810.3 523.4 812.1 555.5 814.9 555.5C817.0 555.5 818.2 527.3 820.3 527.3C822.4 527.3 823.8 548.2 826.0 548.2C828.1 548.2 829.4 535.7 831.5 535.7C833.3 535.7 834.5 540.1 836.3 540.1C837.6 540.1 838.3 538.9 839.5 538.9C841.2 538.9 842.3 551.0 844.0 551.0C846.6 551.0 848.2 518.9 850.8 518.9C853.1 518.9 854.5 541.2 856.8 541.2C858.3 541.2 859.3 537.5 860.8 537.5C863.5 537.5 865.2 557.3 867.9 557.3C870.5 557.3 872.1 539.4 874.7 539.4C876.6 539.4 877.8 548.2 879.7 548.2C881.8 548.2 883.1 525.5 885.2 525.5C886.6 525.5 887.5 535.0 889.0 535.0C890.7 535.0 891.7 519.8 893.4 519.8C895.7 519.8 897.1 544.6 899.3 544.6C900.8 544.6 901.7 539.8 903.2 539.8C905.1 539.8 906.3 554.1 908.2 554.1C910.5 554.1 911.9 523.4 914.1 523.4C916.0 523.4 917.2 551.7 919.1 551.7C920.9 551.7 922.0 524.3 923.7 524.3C925.8 524.3 927.2 563.0 929.3 563.0C931.5 563.0 932.9 530.3 935.1 530.3C936.6 530.3 937.6 546.0 939.1 546.0C941.3 546.0 942.7 518.0 945.0 518.0C947.1 518.0 948.5 545.7 950.7 545.7C952.2 545.7 953.2 536.2 954.8 536.2C956.9 536.2 958.3 559.8 960.5 559.8C962.7 559.8 964.1 526.4 966.4 526.4C968.1 526.4 969.1 540.7 970.8 540.7C972.7 540.7 973.8 526.8 975.6 526.8C976.9 526.8 977.6 532.7 978.9 537.6" fill="none" stroke="#1f6bd3" stroke-width="1.850" stroke-linejoin="round" stroke-linecap="round"/><circle cx="324.300" cy="541.200" r="1" fill="#e02020"/></svg>
<div class="t" style="top:511.69px;font-size:4.400px;line-height:10px;color:#6a6a6a;left:-30.00px;width:300px;text-align:right;"><span>3</span></div>
<div class="t" style="top:522.41px;font-size:4.400px;line-height:10px;color:#6a6a6a;left:-30.00px;width:300px;text-align:right;"><span>2</span></div>
<div class="t" style="top:533.13px;font-size:4.400px;line-height:10px;color:#6a6a6a;left:-30.00px;width:300px;text-align:right;"><span>1</span></div>
<div class="t" style="top:543.85px;font-size:4.400px;line-height:10px;color:#6a6a6a;left:-30.00px;width:300px;text-align:right;"><span>0</span></div>
<div class="t" style="top:554.57px;font-size:4.400px;line-height:10px;color:#6a6a6a;left:-30.00px;width:300px;text-align:right;"><span>-1</span></div>
<div class="t" style="top:565.29px;font-size:4.400px;line-height:10px;color:#6a6a6a;left:-30.00px;width:300px;text-align:right;"><span>-2</span></div>
<div class="t" style="top:578.00px;font-size:4.697px;line-height:10px;color:#6a6a6a;left:122.90px;width:300px;text-align:center;"><span>10:46:21</span></div>
<div class="t" style="top:578.00px;font-size:4.697px;line-height:10px;color:#6a6a6a;left:168.32px;width:300px;text-align:center;"><span>10:46:41</span></div>
<div class="t" style="top:578.00px;font-size:4.697px;line-height:10px;color:#6a6a6a;left:213.74px;width:300px;text-align:center;"><span>10:47:01</span></div>
<div class="t" style="top:578.00px;font-size:4.697px;line-height:10px;color:#6a6a6a;left:259.16px;width:300px;text-align:center;"><span>10:47:21</span></div>
<div class="t" style="top:578.00px;font-size:4.697px;line-height:10px;color:#6a6a6a;left:304.58px;width:300px;text-align:center;"><span>10:47:41</span></div>
<div class="t" style="top:578.00px;font-size:4.697px;line-height:10px;color:#6a6a6a;left:350.00px;width:300px;text-align:center;"><span>10:48:01</span></div>
<div class="t" style="top:578.00px;font-size:4.697px;line-height:10px;color:#6a6a6a;left:395.42px;width:300px;text-align:center;"><span>10:48:21</span></div>
<div class="t" style="top:578.00px;font-size:4.697px;line-height:10px;color:#6a6a6a;left:440.84px;width:300px;text-align:center;"><span>10:48:41</span></div>
<div class="t" style="top:578.00px;font-size:4.697px;line-height:10px;color:#6a6a6a;left:486.26px;width:300px;text-align:center;"><span>10:49:01</span></div>
<div class="t" style="top:578.00px;font-size:4.697px;line-height:10px;color:#6a6a6a;left:531.68px;width:300px;text-align:center;"><span>10:49:21</span></div>
<div class="t" style="top:578.00px;font-size:4.697px;line-height:10px;color:#6a6a6a;left:577.10px;width:300px;text-align:center;"><span>10:49:41</span></div>
<div class="t" style="top:578.00px;font-size:4.697px;line-height:10px;color:#6a6a6a;left:622.52px;width:300px;text-align:center;"><span>10:50:01</span></div>
<div class="t" style="top:578.00px;font-size:4.697px;line-height:10px;color:#6a6a6a;left:667.94px;width:300px;text-align:center;"><span>10:50:21</span></div>
<div class="t" style="top:578.00px;font-size:4.697px;line-height:10px;color:#6a6a6a;left:713.36px;width:300px;text-align:center;"><span>10:50:41</span></div>
<div class="t" style="top:578.00px;font-size:4.697px;line-height:10px;color:#6a6a6a;left:758.78px;width:300px;text-align:center;"><span>10:51:01</span></div>
<div class="t" style="top:578.00px;font-size:4.697px;line-height:10px;color:#6a6a6a;left:804.20px;width:300px;text-align:center;"><span>10:51:21</span></div>
<div class="t" style="top:538.40px;font-size:4.400px;line-height:10px;color:#6a6a6a;left:92.60px;width:300px;text-align:center;transform:rotate(-90deg);"><span>Roll (°)</span></div>
<div class="t" style="top:587.70px;font-size:4.798px;line-height:10px;color:#6a6a6a;left:593.00px;"><span>Series Time(UTC) - 2010-01-19</span></div>
<div class="t" style="top:596.40px;font-size:5.516px;line-height:10px;color:#2a7fa8;left:236.20px;"><span>2010-01-19 10:46:43.302, Roll 0.596°</span></div>
<div class="r" style="left:234.60px;top:607.80px;width:757.00px;height:0.60px;background:#d8d8d8;"></div>
<div class="r" style="left:234.30px;top:607.80px;width:259.20px;height:0.60px;background:#d4d4d4;"></div>
<div class="r" style="left:234.80px;top:607.60px;width:55.50px;height:13.00px;background:#fbfbfb;border:.6px solid #cfcfcf;border-top:none;box-sizing:border-box;"></div>
<div class="t" style="top:609.30px;font-size:5.445px;line-height:10px;color:#222;left:112.55px;width:300px;text-align:center;"><span>Time Series Editor</span></div>
<div class="r" style="left:290.30px;top:608.40px;width:64.30px;height:11.40px;background:linear-gradient(#e9e9e9,#dedede);border:.6px solid #d0d0d0;border-top:none;box-sizing:border-box;"></div>
<div class="t" style="top:609.30px;font-size:5.656px;line-height:10px;color:#222;left:172.45px;width:300px;text-align:center;"><span>Time Series Multiplot</span></div>
<div class="r" style="left:354.60px;top:608.40px;width:48.40px;height:11.40px;background:linear-gradient(#e9e9e9,#dedede);border:.6px solid #d0d0d0;border-top:none;box-sizing:border-box;"></div>
<div class="t" style="top:609.30px;font-size:5.612px;line-height:10px;color:#222;left:228.80px;width:300px;text-align:center;"><span>Water Column</span></div>
<div class="r" style="left:403.00px;top:608.40px;width:50.40px;height:11.40px;background:linear-gradient(#e9e9e9,#dedede);border:.6px solid #d0d0d0;border-top:none;box-sizing:border-box;"></div>
<div class="t" style="top:609.30px;font-size:5.429px;line-height:10px;color:#222;left:278.20px;width:300px;text-align:center;"><span>Process History</span></div>
<div class="r" style="left:453.40px;top:608.40px;width:39.60px;height:11.40px;background:linear-gradient(#e9e9e9,#dedede);border:.6px solid #d0d0d0;border-top:none;box-sizing:border-box;"></div>
<div class="t" style="top:609.30px;font-size:5.388px;line-height:10px;color:#222;left:323.20px;width:300px;text-align:center;"><span>Slice Editor</span></div>
</body></html>
